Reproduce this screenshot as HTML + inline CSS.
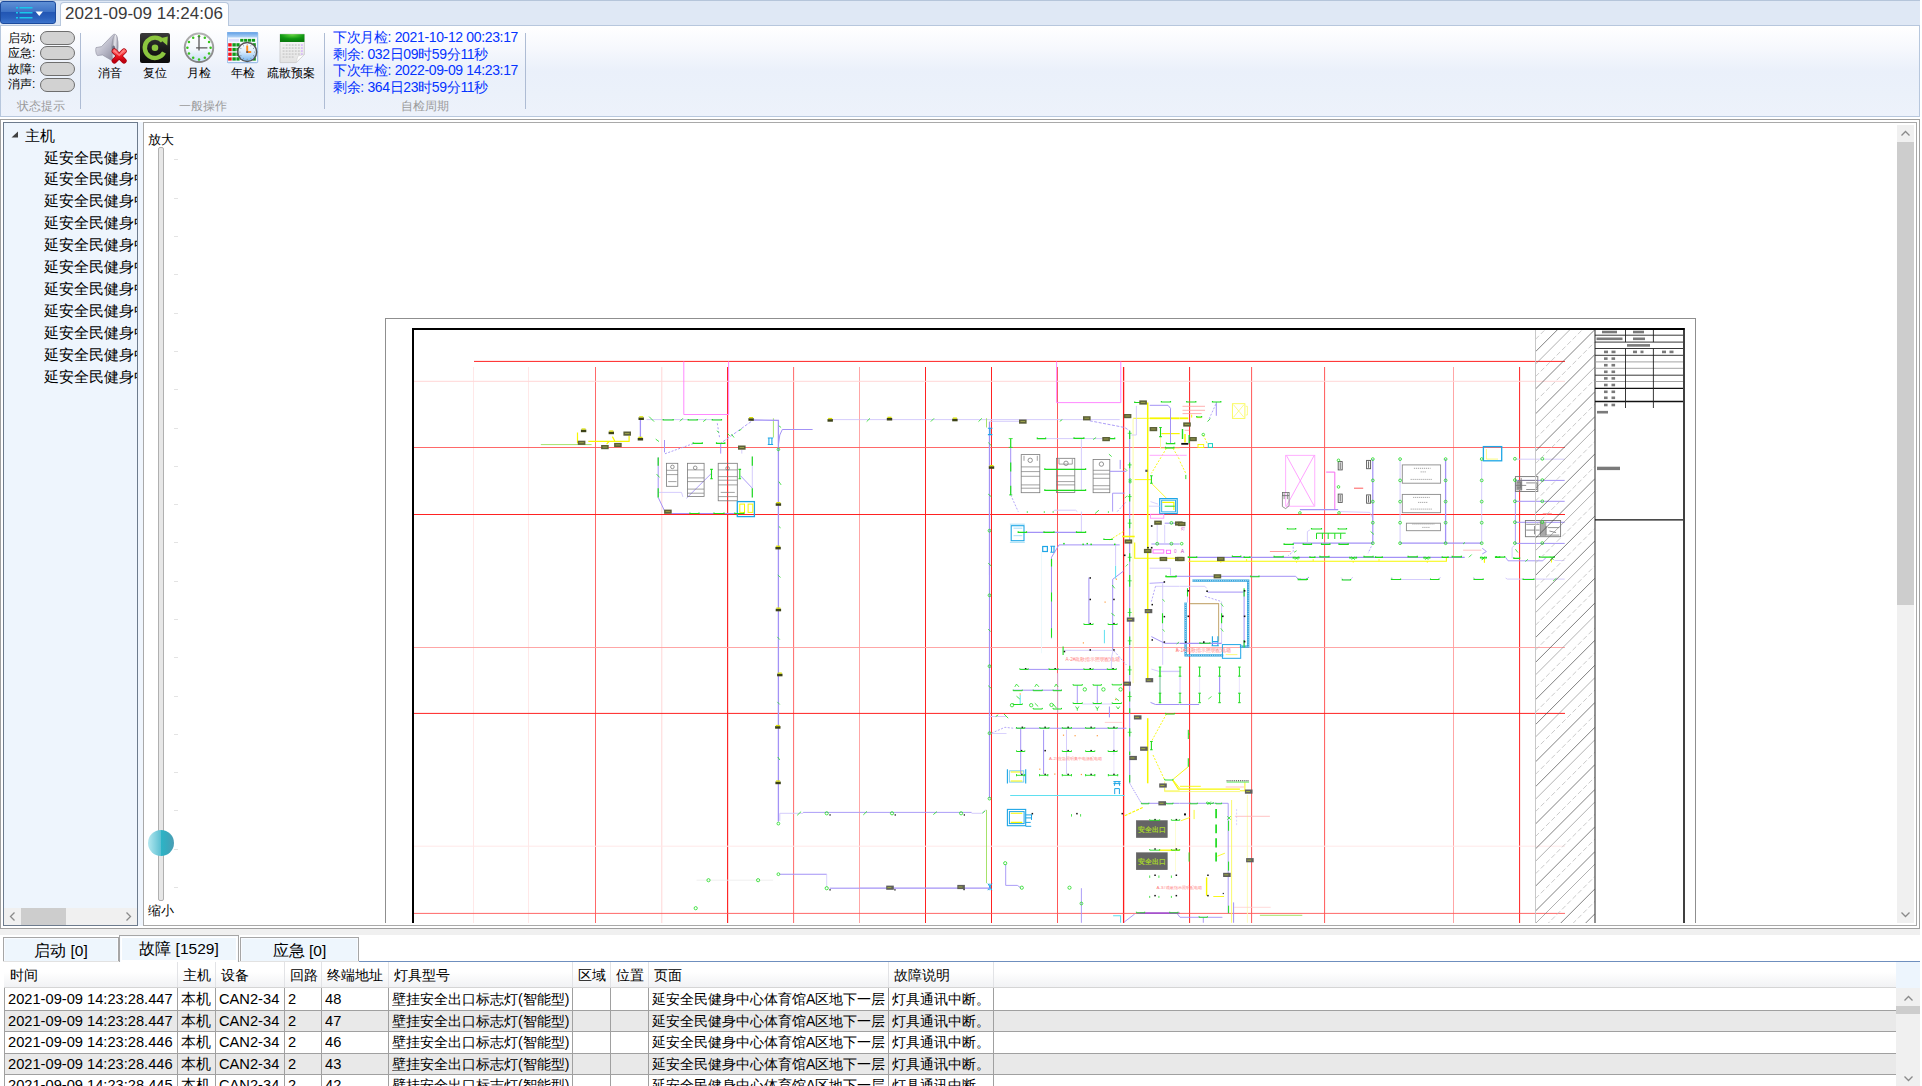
<!DOCTYPE html>
<html lang="zh">
<head>
<meta charset="utf-8">
<title>monitor</title>
<style>
html,body{margin:0;padding:0;}
body{width:1922px;height:1086px;overflow:hidden;background:#fff;position:relative;font-family:"Liberation Sans",sans-serif;color:#000;}
.abs{position:absolute;}
#topbar{left:0;top:0;width:1920px;height:25px;background:#dfe8f5;border-top:1px solid #b5c5da;box-sizing:border-box;}
#appbtn{left:0;top:1px;width:56px;height:23px;box-sizing:border-box;border:1px solid #1c4a9c;border-radius:3px;background:linear-gradient(#5f90d6 0%,#3f73c6 45%,#2256b4 50%,#2a60bc 75%,#3c74cc 100%);}
#tab{left:60px;top:2px;width:169px;height:24px;box-sizing:border-box;border:1px solid #b7c7dd;border-bottom:none;border-radius:4px 4px 0 0;background:linear-gradient(#fdfeff,#ffffff);font-size:17px;line-height:21px;color:#3a3a3a;padding-left:4px;white-space:nowrap;}
#ribbon{left:0;top:25px;width:1920px;height:92px;box-sizing:border-box;border:1px solid #b7c7dd;background:linear-gradient(#ffffff 0%,#f6f8fd 25%,#eaf0fa 50%,#ebf1fa 75%,#edf2fb 100%);}
.sep{width:1px;background:#aebcd4;top:33px;height:76px;}
.stl{left:8px;font-size:12px;line-height:14px;white-space:nowrap;}
.pill{left:40px;width:35px;height:14px;box-sizing:border-box;border:1px solid #6e6e6e;border-radius:7px;background:#d2d2d2;}
.glab{font-size:12px;line-height:14px;color:#9b9b9b;top:99px;white-space:nowrap;text-align:center;}
.blab{font-size:12px;line-height:14px;top:66px;white-space:nowrap;text-align:center;width:60px;}
.cyc{left:333px;font-size:14px;line-height:16px;color:#0433ff;white-space:nowrap;letter-spacing:-0.35px;}

#outer{left:0;top:119px;width:1920px;height:810px;box-sizing:border-box;border:1px solid #a0a0a0;background:#fff;}
#tree{left:3px;top:122px;width:135px;height:804px;box-sizing:border-box;border:1px solid #6d7b8d;background:#eef5fd;overflow:hidden;}
#split{left:138px;top:122px;width:5px;height:804px;background:#eff5fd;}
#canvas{left:143px;top:122px;width:1774px;height:804px;box-sizing:border-box;border:1px solid #a9a9a9;background:#fff;overflow:hidden;}
.ti{left:40px;font-size:14.67px;line-height:18px;white-space:nowrap;}
.zl{left:148px;font-size:13px;line-height:15px;white-space:nowrap;}
#strip{left:0;top:929px;width:1920px;height:6px;background:#f0f0f0;}
.btab{box-sizing:border-box;border:1px solid #a6a6a6;border-bottom:none;background:#eef6fd;box-shadow:inset 1px 1px 0 #f8fbff,inset -1px 0 0 #f8fbff;font-size:15.5px;line-height:18px;text-align:center;white-space:nowrap;}
#tabline{left:359px;top:961px;width:1561px;height:1px;background:#6f8fbe;}
#thead{left:4px;top:962px;width:1892px;height:25px;background:linear-gradient(#ffffff 0%,#ffffff 40%,#f1f2f4 100%);border-bottom:1px solid #d5d5d5;}
.th{top:967px;font-size:14px;line-height:16px;white-space:nowrap;}
.row{left:4px;width:1892px;}
.hl{left:4px;width:1892px;height:1px;background:#a0a0a0;}
.vl{top:962px;width:1px;height:124px;background:#a0a0a0;}
.vh{top:962px;width:1px;height:25px;background:#e2e3e6;}
.td{font-size:14.67px;line-height:18px;white-space:nowrap;overflow:hidden;}
.tc{font-size:14px;}
</style>
</head>
<body>
<!-- ===== top bar / ribbon ===== -->
<div id="topbar" class="abs"></div>
<div id="ribbon" class="abs"></div>
<div id="appbtn" class="abs">
<svg class="abs" style="left:0;top:0" width="54" height="21" viewBox="0 0 54 21">
<g fill="#19c8ea"><rect x="15" y="5" width="2" height="1.5"/><rect x="18.5" y="5" width="13" height="1.5"/><rect x="15" y="10" width="2" height="1.5"/><rect x="18.5" y="10" width="13" height="1.5"/><rect x="15" y="15" width="2" height="1.5"/><rect x="18.5" y="15" width="13" height="1.5"/></g>
<path d="M34.5 9.5 L42 9.5 L38.25 14 Z" fill="#fff"/>
</svg>
</div>
<div id="tab" class="abs">2021-09-09 14:24:06</div>

<div class="abs stl" style="top:31px">启动:</div><div class="abs pill" style="top:31px"></div>
<div class="abs stl" style="top:46px">应急:</div><div class="abs pill" style="top:46px"></div>
<div class="abs stl" style="top:62px">故障:</div><div class="abs pill" style="top:62px"></div>
<div class="abs stl" style="top:77px">消声:</div><div class="abs pill" style="top:78px"></div>
<div class="abs glab" style="left:1px;width:80px">状态提示</div>
<div class="abs sep" style="left:80px"></div>
<div class="abs blab" style="left:80px">消音</div>
<div class="abs blab" style="left:125px">复位</div>
<div class="abs blab" style="left:169px">月检</div>
<div class="abs blab" style="left:213px">年检</div>
<div class="abs blab" style="left:261px">疏散预案</div>
<div class="abs glab" style="left:163px;width:80px">一般操作</div>
<div class="abs sep" style="left:324px"></div>
<div class="abs cyc" style="top:29px">下次月检: 2021-10-12 00:23:17</div>
<div class="abs cyc" style="top:46px">剩余: 032日09时59分11秒</div>
<div class="abs cyc" style="top:62px">下次年检: 2022-09-09 14:23:17</div>
<div class="abs cyc" style="top:79px">剩余: 364日23时59分11秒</div>
<div class="abs glab" style="left:385px;width:80px">自检周期</div>
<div class="abs sep" style="left:525px"></div>
<svg class="abs" style="left:95px;top:32px" width="32" height="32" viewBox="0 0 32 32">
<defs><linearGradient id="spk" x1="0" y1="0" x2="1" y2="1"><stop offset="0" stop-color="#f4f4f8"/><stop offset="0.5" stop-color="#b9b9c8"/><stop offset="1" stop-color="#7f7f90"/></linearGradient>
<linearGradient id="spk2" x1="0" y1="0" x2="1" y2="0"><stop offset="0" stop-color="#8a8a98"/><stop offset="0.5" stop-color="#e8e8ee"/><stop offset="1" stop-color="#a0a0ae"/></linearGradient>
<linearGradient id="rx" x1="0" y1="0" x2="0" y2="1"><stop offset="0" stop-color="#ff6a6a"/><stop offset="0.5" stop-color="#f01820"/><stop offset="1" stop-color="#c00010"/></linearGradient></defs>
<path d="M1 15.6 L6.5 14.6 L17.5 3.2 C19 1.6 21 1.8 22 5 C23.6 10 23.4 19 21.6 25 C20.6 28.6 19 30.2 17.6 29 L7.5 23 L2.4 23.6 C0.6 21.6 0.4 17.6 1 15.6 Z" fill="url(#spk)" stroke="#8c8c9c" stroke-width="0.6"/>
<ellipse cx="19.6" cy="15" rx="3" ry="12.6" fill="url(#spk2)" stroke="#9a9aa8" stroke-width="0.5" transform="rotate(4 19.6 15)"/>
<ellipse cx="18.6" cy="18" rx="1.6" ry="4.4" fill="#6e6e80"/>
<path d="M19.4 19.2 L29 28.8 M29 19.2 L19.4 28.8" stroke="#a8000c" stroke-width="5.4" stroke-linecap="round"/>
<path d="M19.4 19.2 L29 28.8 M29 19.2 L19.4 28.8" stroke="url(#rx)" stroke-width="4" stroke-linecap="round"/>
<path d="M19.6 19.0 L24.2 23.4 L28.6 19.0" stroke="#ff9a9a" stroke-width="1.2" fill="none" stroke-linecap="round" opacity="0.7"/>
</svg>
<svg class="abs" style="left:140px;top:33px" width="30" height="30" viewBox="0 0 30 30">
<defs><linearGradient id="bk" x1="0" y1="0" x2="0" y2="1"><stop offset="0" stop-color="#3a3a3a"/><stop offset="0.5" stop-color="#1c1c1c"/><stop offset="1" stop-color="#0a0a0a"/></linearGradient></defs>
<rect x="0" y="0" width="30" height="30" rx="2" fill="url(#bk)"/>
<path d="M22.58 7.97 A10.2 10.2 0 1 0 24.01 19.59" fill="none" stroke="#8cc63f" stroke-width="4.4"/>
<path d="M19.2 5.6 L27.8 3.4 L27.2 12.4 Z" fill="#8cc63f"/>
<circle cx="15" cy="14.8" r="3.3" fill="#8cc63f"/>
</svg>
<svg class="abs" style="left:183px;top:32px" width="32" height="32" viewBox="0 0 32 32">
<defs><linearGradient id="cf" x1="0" y1="0" x2="0" y2="1"><stop offset="0" stop-color="#ffffff"/><stop offset="0.55" stop-color="#f4f8fd"/><stop offset="1" stop-color="#c9def5"/></linearGradient>
<linearGradient id="cr" x1="0" y1="0" x2="0" y2="1"><stop offset="0" stop-color="#b4b4b4"/><stop offset="1" stop-color="#7e7e7e"/></linearGradient></defs>
<circle cx="16" cy="15.8" r="15.2" fill="url(#cr)"/>
<circle cx="16" cy="15.8" r="13.3" fill="url(#cf)"/>
<circle cx="16.00" cy="4.20" r="1.25" fill="#35c41a"/><circle cx="21.80" cy="5.75" r="1.25" fill="#35c41a"/><circle cx="26.05" cy="10.00" r="1.25" fill="#35c41a"/><circle cx="27.60" cy="15.80" r="1.25" fill="#35c41a"/><circle cx="26.05" cy="21.60" r="1.25" fill="#35c41a"/><circle cx="21.80" cy="25.85" r="1.25" fill="#35c41a"/><circle cx="16.00" cy="27.40" r="1.25" fill="#35c41a"/><circle cx="10.20" cy="25.85" r="1.25" fill="#35c41a"/><circle cx="5.95" cy="21.60" r="1.25" fill="#35c41a"/><circle cx="4.40" cy="15.80" r="1.25" fill="#35c41a"/><circle cx="5.95" cy="10.00" r="1.25" fill="#35c41a"/><circle cx="10.20" cy="5.75" r="1.25" fill="#35c41a"/>
<path d="M16 4 L16 18.6 M13.1 15.8 L24.4 15.8" stroke="#5a5a5a" stroke-width="1.3" fill="none"/>
</svg>
<svg class="abs" style="left:227px;top:32px" width="32" height="32" viewBox="0 0 32 32">
<defs><linearGradient id="cb" x1="0" y1="0" x2="0" y2="1"><stop offset="0" stop-color="#5f9fe6"/><stop offset="1" stop-color="#b4d4f6"/></linearGradient>
<linearGradient id="cf2" x1="0" y1="0" x2="0" y2="1"><stop offset="0" stop-color="#ffffff"/><stop offset="0.5" stop-color="#d8eafb"/><stop offset="1" stop-color="#7db8ee"/></linearGradient></defs>
<rect x="0.3" y="0.3" width="30.4" height="30.4" rx="1" fill="#f4f8ff" stroke="#6f9fdc" stroke-width="0.8"/>
<rect x="0.3" y="0.3" width="30.4" height="5.2" fill="url(#cb)"/>
<rect x="1.8" y="6.9" width="10.2" height="2.8" fill="#dde0fb"/>
<rect x="13.2" y="6.9" width="3.2" height="2.8" fill="#109a18"/><rect x="17.1" y="6.9" width="3.2" height="2.8" fill="#109a18"/><rect x="21.0" y="6.9" width="3.2" height="2.8" fill="#109a18"/><rect x="24.9" y="6.9" width="3.2" height="2.8" fill="#109a18"/><rect x="1.2" y="11.2" width="3.5" height="3.3" fill="#f5121a"/><rect x="5.4" y="11.2" width="3.4" height="3.3" fill="#109a18"/><rect x="9.4" y="11.2" width="3.2" height="3.3" fill="#109a18"/><rect x="25.6" y="11.2" width="3.2" height="3.3" fill="#109a18"/><rect x="1.2" y="15.9" width="3.5" height="3.3" fill="#f5121a"/><rect x="5.4" y="15.9" width="3.4" height="3.3" fill="#109a18"/><rect x="9.4" y="15.9" width="3.2" height="3.3" fill="#109a18"/><rect x="25.6" y="15.9" width="3.2" height="3.3" fill="#109a18"/><rect x="1.2" y="20.6" width="3.5" height="3.3" fill="#f5121a"/><rect x="5.4" y="20.6" width="3.4" height="3.3" fill="#109a18"/><rect x="9.4" y="20.6" width="3.2" height="3.3" fill="#109a18"/><rect x="25.6" y="20.6" width="3.2" height="3.3" fill="#109a18"/><rect x="1.2" y="25.3" width="3.5" height="3.3" fill="#f5121a"/><rect x="5.4" y="25.3" width="3.4" height="3.3" fill="#109a18"/><rect x="9.4" y="25.3" width="3.2" height="3.3" fill="#109a18"/><rect x="25.6" y="25.3" width="3.2" height="3.3" fill="#109a18"/>
<circle cx="20.2" cy="20" r="10.2" fill="#555"/>
<circle cx="20.2" cy="20" r="8.7" fill="url(#cf2)"/>
<circle cx="20.20" cy="12.70" r="0.55" fill="#7a8a9c"/><circle cx="23.85" cy="13.68" r="0.55" fill="#7a8a9c"/><circle cx="26.52" cy="16.35" r="0.55" fill="#7a8a9c"/><circle cx="27.50" cy="20.00" r="0.55" fill="#7a8a9c"/><circle cx="26.52" cy="23.65" r="0.55" fill="#7a8a9c"/><circle cx="23.85" cy="26.32" r="0.55" fill="#7a8a9c"/><circle cx="20.20" cy="27.30" r="0.55" fill="#7a8a9c"/><circle cx="16.55" cy="26.32" r="0.55" fill="#7a8a9c"/><circle cx="13.88" cy="23.65" r="0.55" fill="#7a8a9c"/><circle cx="12.90" cy="20.00" r="0.55" fill="#7a8a9c"/><circle cx="13.88" cy="16.35" r="0.55" fill="#7a8a9c"/><circle cx="16.55" cy="13.68" r="0.55" fill="#7a8a9c"/>
<path d="M20.2 13.6 L20.2 20 L24.2 20" stroke="#ff8a18" stroke-width="1.9" fill="none"/>
<rect x="19.3" y="19.1" width="1.8" height="1.8" fill="#556"/>
</svg>
<svg class="abs" style="left:279px;top:33px" width="27" height="31" viewBox="0 0 27 31">
<defs><linearGradient id="pg" x1="0" y1="0" x2="0" y2="1"><stop offset="0" stop-color="#fafafa"/><stop offset="1" stop-color="#e2e2e2"/></linearGradient>
<radialGradient id="gh" cx="0.5" cy="0.1" r="0.8"><stop offset="0" stop-color="#5fd23c"/><stop offset="0.6" stop-color="#0f9812"/><stop offset="1" stop-color="#0a7d0e"/></radialGradient></defs>
<path d="M1 1.2 L25.4 1.2 L25.4 21.5 L17 29.6 L1 29.6 Z" fill="url(#pg)" stroke="#c2c2c2" stroke-width="0.7"/>
<rect x="1" y="1.2" width="24.4" height="7.8" fill="url(#gh)"/>
<rect x="3.6" y="11.2" width="1.9" height="1.7" fill="#e6e6e6"/><rect x="6.7" y="11.2" width="1.9" height="1.7" fill="#cfcfcf"/><rect x="9.7" y="11.2" width="1.9" height="1.7" fill="#cfcfcf"/><rect x="12.7" y="11.2" width="1.9" height="1.7" fill="#cfcfcf"/><rect x="15.8" y="11.2" width="1.9" height="1.7" fill="#cfcfcf"/><rect x="18.9" y="11.2" width="1.9" height="1.7" fill="#cfcfcf"/><rect x="21.9" y="11.2" width="1.9" height="1.7" fill="#d9b8fb"/><rect x="3.6" y="14.2" width="1.9" height="1.7" fill="#cfcfcf"/><rect x="6.7" y="14.2" width="1.9" height="1.7" fill="#cfcfcf"/><rect x="9.7" y="14.2" width="1.9" height="1.7" fill="#cfcfcf"/><rect x="12.7" y="14.2" width="1.9" height="1.7" fill="#cfcfcf"/><rect x="15.8" y="14.2" width="1.9" height="1.7" fill="#cfcfcf"/><rect x="18.9" y="14.2" width="1.9" height="1.7" fill="#cfcfcf"/><rect x="21.9" y="14.2" width="1.9" height="1.7" fill="#d9b8fb"/><rect x="3.6" y="17.2" width="1.9" height="1.7" fill="#cfcfcf"/><rect x="6.7" y="17.2" width="1.9" height="1.7" fill="#cfcfcf"/><rect x="9.7" y="17.2" width="1.9" height="1.7" fill="#cfcfcf"/><rect x="12.7" y="17.2" width="1.9" height="1.7" fill="#cfcfcf"/><rect x="15.8" y="17.2" width="1.9" height="1.7" fill="#cfcfcf"/><rect x="18.9" y="17.2" width="1.9" height="1.7" fill="#cfcfcf"/><rect x="21.9" y="17.2" width="1.9" height="1.7" fill="#d9b8fb"/><rect x="3.6" y="20.2" width="1.9" height="1.7" fill="#cfcfcf"/><rect x="6.7" y="20.2" width="1.9" height="1.7" fill="#cfcfcf"/><rect x="9.7" y="20.2" width="1.9" height="1.7" fill="#cfcfcf"/><rect x="12.7" y="20.2" width="1.9" height="1.7" fill="#cfcfcf"/><rect x="15.8" y="20.2" width="1.9" height="1.7" fill="#cfcfcf"/><rect x="18.9" y="20.2" width="1.9" height="1.7" fill="#cfcfcf"/><rect x="21.9" y="20.2" width="1.9" height="1.7" fill="#d9b8fb"/><rect x="3.6" y="23.2" width="1.9" height="1.7" fill="#cfcfcf"/><rect x="6.7" y="23.2" width="1.9" height="1.7" fill="#cfcfcf"/><rect x="9.7" y="23.2" width="1.9" height="1.7" fill="#cfcfcf"/><rect x="12.7" y="23.2" width="1.9" height="1.7" fill="#cfcfcf"/>
<path d="M25.4 21.5 L17 29.6 L19 23 Z" fill="#fff" stroke="#c8c8c8" stroke-width="0.5"/>
</svg>


<!-- ===== main area ===== -->
<div id="outer" class="abs"></div>
<div id="tree" class="abs"></div>
<svg class="abs" style="left:11px;top:131px" width="8" height="8" viewBox="0 0 8 8"><path d="M7 0.5 L7 6.5 L0.5 6.5 Z" fill="#404040"/></svg>
<div class="abs ti" style="left:25px;top:127px">主机</div>
<div class="abs ti" style="left:44px;top:148.5px;width:93px;overflow:hidden">延安全民健身中心</div>
<div class="abs ti" style="left:44px;top:170.4px;width:93px;overflow:hidden">延安全民健身中心</div>
<div class="abs ti" style="left:44px;top:192.3px;width:93px;overflow:hidden">延安全民健身中心</div>
<div class="abs ti" style="left:44px;top:214.2px;width:93px;overflow:hidden">延安全民健身中心</div>
<div class="abs ti" style="left:44px;top:236.1px;width:93px;overflow:hidden">延安全民健身中心</div>
<div class="abs ti" style="left:44px;top:258.0px;width:93px;overflow:hidden">延安全民健身中心</div>
<div class="abs ti" style="left:44px;top:279.9px;width:93px;overflow:hidden">延安全民健身中心</div>
<div class="abs ti" style="left:44px;top:301.8px;width:93px;overflow:hidden">延安全民健身中心</div>
<div class="abs ti" style="left:44px;top:323.7px;width:93px;overflow:hidden">延安全民健身中心</div>
<div class="abs ti" style="left:44px;top:345.6px;width:93px;overflow:hidden">延安全民健身中心</div>
<div class="abs ti" style="left:44px;top:367.5px;width:93px;overflow:hidden">延安全民健身中心</div>
<div class="abs" style="left:4px;top:908px;width:133px;height:17px;background:#f0f0f0"></div>
<div class="abs" style="left:21px;top:908px;width:45px;height:17px;background:#cdcdcd"></div>
<svg class="abs" style="left:4px;top:908px" width="133" height="17" viewBox="0 0 133 17"><path d="M10.5 4.5 L6.5 8.5 L10.5 12.5 M122.5 4.5 L126.5 8.5 L122.5 12.5" fill="none" stroke="#8a8a8a" stroke-width="1.3"/></svg>
<div id="split" class="abs"></div>
<div id="canvas" class="abs"></div>
<!-- DRAWING-START -->
<svg class="abs" style="left:146px;top:125px" width="1751" height="798" viewBox="146 125 1751 798">
<rect x="385.5" y="318.5" width="1310" height="640" fill="#fff" stroke="#8f8f8f" stroke-width="1"/>
<path d="M473.5 367.0 L473.5 930.0" stroke="#ffe8e8" stroke-width="1"/>
<path d="M528.5 367.0 L528.5 930.0" stroke="#ffe8e8" stroke-width="1"/>
<path d="M595.5 367.0 L595.5 930.0" stroke="#ff5858" stroke-width="0.9"/>
<path d="M661.8 367.0 L661.8 930.0" stroke="#ffd6d6" stroke-width="1"/>
<path d="M727.6 367.0 L727.6 930.0" stroke="#ff2222" stroke-width="1.15"/>
<path d="M793.6 367.0 L793.6 930.0" stroke="#ff5858" stroke-width="0.9"/>
<path d="M859.5 367.0 L859.5 930.0" stroke="#ff9c9c" stroke-width="0.9"/>
<path d="M925.5 367.0 L925.5 930.0" stroke="#ff2222" stroke-width="1"/>
<path d="M991.5 367.0 L991.5 930.0" stroke="#ff2222" stroke-width="1"/>
<path d="M1057.5 367.0 L1057.5 930.0" stroke="#ff5858" stroke-width="1"/>
<path d="M1123.6 367.0 L1123.6 930.0" stroke="#ff1a1a" stroke-width="1.3"/>
<path d="M1189.6 367.0 L1189.6 930.0" stroke="#ff2222" stroke-width="1"/>
<path d="M1251.6 367.0 L1251.6 930.0" stroke="#ff5858" stroke-width="1"/>
<path d="M1324.6 367.0 L1324.6 930.0" stroke="#ff5858" stroke-width="1"/>
<path d="M1453.5 367.0 L1453.5 930.0" stroke="#ff9c9c" stroke-width="0.9"/>
<path d="M1519.6 367.0 L1519.6 930.0" stroke="#ff2222" stroke-width="1"/>
<path d="M474.0 361.4 L1565.0 361.4" stroke="#ff2222" stroke-width="1"/>
<path d="M414.0 381.3 L1565.0 381.3" stroke="#ffd6d6" stroke-width="1"/>
<path d="M414.0 447.5 L1565.0 447.5" stroke="#ff5858" stroke-width="0.9"/>
<path d="M414.0 514.5 L1565.0 514.5" stroke="#ff2222" stroke-width="1"/>
<path d="M414.0 647.5 L1565.0 647.5" stroke="#ff9c9c" stroke-width="0.9"/>
<path d="M414.0 713.4 L1565.0 713.4" stroke="#ff2222" stroke-width="1"/>
<path d="M414.0 846.2 L1565.0 846.2" stroke="#ffe8e8" stroke-width="1"/>
<path d="M414.0 913.4 L1565.0 913.4" stroke="#ff5858" stroke-width="0.9"/>
<path d="M683.8 361.4 L683.8 414.5 L728.6 414.5 L728.6 361.4" fill="none" stroke="#ff7cff" stroke-width="0.9"/>
<path d="M1056.6 361.4 L1056.6 402.6 L1120.8 402.6 L1120.8 361.4" fill="none" stroke="#ff7cff" stroke-width="0.9"/>
<path d="M577.5 432.5 L577.5 443.3 M588.3 441.3 L629.1 441.3 L629.1 435.8 M606.6 444.1 L609.1 441.3 M612.4 436.6 L614.9 441.3" fill="none" stroke="#f7f700" stroke-width="1.2"/>
<path d="M540.8 444.6 L591.6 444.6" fill="none" stroke="#a6e26a" stroke-width="1"/>
<path d="M773.4 418.3 L773.4 437.5" fill="none" stroke="#a6e26a" stroke-width="1"/>
<path d="M640.4 420.0 L640.4 437.5" fill="none" stroke="#a392f6" stroke-width="1.3"/>
<path d="M646.6 419.6 L721.5 419.6" fill="none" stroke="#d0c6fc" stroke-width="0.9"/>
<path d="M751.1 420.0 L778.4 420.3 L778.4 575.0" fill="none" stroke="#a392f6" stroke-width="1.3"/>
<path d="M751.1 421.6 L720.7 443.3" fill="none" stroke="#a392f6" stroke-width="0.9" stroke-dasharray="3 1.5"/>
<path d="M693.2 443.6 L664.0 454.1" fill="none" stroke="#a392f6" stroke-width="0.9" stroke-dasharray="2 1.5"/>
<path d="M664.5 440.0 L664.5 452.4" fill="none" stroke="#a392f6" stroke-width="1"/>
<path d="M658.2 457.4 L658.2 497.4 L664.9 511.6" fill="none" stroke="#a392f6" stroke-width="1"/>
<path d="M671.5 513.5 L736.5 513.5" fill="none" stroke="#a392f6" stroke-width="1.2"/>
<path d="M659.0 492.4 L681.5 492.4 L682.9 496.9" fill="none" stroke="#d0c6fc" stroke-width="0.9"/>
<path d="M686.5 498.2 L711.5 473.3" fill="none" stroke="#a392f6" stroke-width="0.9"/>
<path d="M720.7 443.3 L720.7 453.6" fill="none" stroke="#a392f6" stroke-width="1"/>
<path d="M717.3 423.3 L719.8 439.1" fill="none" stroke="#a392f6" stroke-width="0.9" stroke-dasharray="2 2"/>
<path d="M740.6 475.8 L752.3 488.2" fill="none" stroke="#a392f6" stroke-width="0.9"/>
<path d="M752.3 456.6 L752.3 497.4" fill="none" stroke="#d0c6fc" stroke-width="0.9"/>
<path d="M778.4 445.0 L779.8 435.0 L782.3 429.5 L812.6 429.5" fill="none" stroke="#a392f6" stroke-width="1"/>
<path d="M830.2 419.6 L859.7 419.6" fill="none" stroke="#d0c6fc" stroke-width="0.9"/>
<path d="M741.8 449.9 L741.8 453.6" fill="none" stroke="#d0c6fc" stroke-width="0.9"/>
<path d="M649.1 416.6 L654.1 421.6 M679.9 421.3 L682.9 418.3 M703.2 421.6 L706.2 419.3 M655.7 439.1 L659.0 441.6 M727.3 433.3 L729.8 435.8 M731.5 434.1 L734.0 437.5 M739.0 430.8 L741.5 429.1 M716.8 430.8 L719.0 432.5 M656.6 474.1 L659.5 477.4 M778.9 481.6 L781.1 484.9 M778.9 425.8 L781.1 427.5 M778.9 526.5 L780.6 527.9" fill="none" stroke="#1fdc1f" stroke-width="0.8"/>
<path d="M658.2 457.4 L658.2 465.8 M658.2 488.2 L658.2 497.4 M752.3 456.6 L752.3 465.8 M752.3 488.2 L752.3 497.4" fill="none" stroke="#1fdc1f" stroke-width="1.2"/>
<rect x="666.5" y="463.3" width="11.3" height="23.0" fill="none" stroke="#7a7a7a" stroke-width="0.8"/>
<rect x="687.4" y="463.3" width="16.7" height="33.3" fill="none" stroke="#7a7a7a" stroke-width="0.8"/>
<rect x="718.2" y="463.3" width="19.1" height="37.5" fill="none" stroke="#7a7a7a" stroke-width="0.8"/>
<path d="M666.5 470.3 L677.9 470.3 M666.5 474.6 L677.9 474.6 M668.2 481.6 L676.5 481.6 M687.4 469.9 L704.0 469.9 M687.4 477.9 L704.0 477.9 M687.4 481.6 L704.0 481.6 M687.4 489.1 L704.0 489.1 M687.4 493.2 L704.0 493.2 M718.2 469.9 L737.3 469.9 M718.2 476.6 L737.3 476.6 M718.2 480.2 L737.3 480.2 M718.2 484.9 L737.3 484.9 M720.7 492.4 L734.8 492.4 M718.2 496.6 L737.3 496.6" fill="none" stroke="#7a7a7a" stroke-width="0.7"/>
<rect x="737.3" y="501.6" width="17.1" height="15.0" fill="none" stroke="#1ea6e6" stroke-width="1.3"/>
<rect x="739.8" y="504.1" width="4.7" height="8.3" fill="none" stroke="#f7f700" stroke-width="1"/>
<rect x="748.1" y="504.1" width="4.7" height="8.3" fill="none" stroke="#f7f700" stroke-width="1"/>
<path d="M768.9 438.0 L768.9 444.5 M771.9 438.0 L771.9 444.5 M767.8 438.0 L773.1 438.0 M767.8 444.5 L773.1 444.5" fill="none" stroke="#1ea6e6" stroke-width="1.1"/>
<path d="M860.0 419.6 L1119.7 419.6" fill="none" stroke="#d0c6fc" stroke-width="0.9"/>
<path d="M989.5 421.6 L989.5 575.0" fill="none" stroke="#a392f6" stroke-width="1.3"/>
<path d="M986.5 418.3 L986.5 427.5" fill="none" stroke="#a6e26a" stroke-width="1"/>
<path d="M989.5 421.3 L1019.8 421.3" fill="none" stroke="#d0c6fc" stroke-width="0.9"/>
<path d="M989.9 428.3 L989.9 434.6 M987.9 428.3 L992.4 428.3 M987.9 434.6 L992.4 434.6" fill="none" stroke="#1ea6e6" stroke-width="1.1"/>
<path d="M1010.7 447.4 L1010.7 494.9" fill="none" stroke="#a392f6" stroke-width="1"/>
<path d="M1010.7 494.9 L1018.2 511.6" fill="none" stroke="#a392f6" stroke-width="0.8" stroke-dasharray="2 1.5"/>
<path d="M1010.7 438.6 L1010.7 447.4 M1010.7 462.4 L1010.7 471.6 M1010.7 485.7 L1010.7 494.9" fill="none" stroke="#1fdc1f" stroke-width="1.2"/>
<path d="M1008.7 438.6 L1012.7 438.6 M1008.7 447.4 L1012.7 447.4 M1009.0 494.9 L1012.3 494.9" fill="none" stroke="#1fdc1f" stroke-width="0.8"/>
<path d="M1037.3 438.6 L1114.7 438.6" fill="none" stroke="#d0c6fc" stroke-width="0.9"/>
<path d="M1089.8 420.8 L1124.7 427.5 L1129.7 430.8" fill="none" stroke="#a392f6" stroke-width="0.9" stroke-dasharray="3 1.5"/>
<path d="M1129.7 430.8 L1129.7 575.0" fill="none" stroke="#a392f6" stroke-width="1"/>
<path d="M1081.4 438.6 L1081.4 490.7 M1081.4 511.6 L1081.4 532.4" fill="none" stroke="#d0c6fc" stroke-width="0.9"/>
<rect x="1021.2" y="454.6" width="18.6" height="38.1" fill="none" stroke="#7a7a7a" stroke-width="0.8"/>
<rect x="1056.5" y="458.3" width="18.3" height="34.1" fill="none" stroke="#7a7a7a" stroke-width="0.8"/>
<rect x="1093.1" y="459.4" width="16.7" height="33.3" fill="none" stroke="#7a7a7a" stroke-width="0.8"/>
<path d="M1021.2 466.9 L1039.8 466.9 M1021.2 471.6 L1039.8 471.6 M1021.2 476.3 L1039.8 476.3 M1021.2 484.9 L1039.8 484.9 M1021.2 488.2 L1039.8 488.2 M1024.0 455.8 L1024.0 460.8 M1037.3 455.8 L1037.3 460.8 M1056.5 469.4 L1074.8 469.4 M1056.5 475.8 L1074.8 475.8 M1056.5 481.6 L1074.8 481.6 M1056.5 484.9 L1074.8 484.9 M1056.5 490.4 L1074.8 490.4 M1059.0 459.1 L1059.0 464.1 L1072.3 464.1 L1072.3 459.1 M1093.1 470.3 L1109.8 470.3 M1093.1 474.1 L1109.8 474.1 M1093.1 478.3 L1109.8 478.3 M1093.1 485.7 L1109.8 485.7 M1093.1 489.1 L1109.8 489.1" fill="none" stroke="#7a7a7a" stroke-width="0.7"/>
<path d="M1109.8 471.3 L1126.4 471.3" fill="none" stroke="#a392f6" stroke-width="1"/>
<path d="M1120.2 459.9 L1120.2 469.1" fill="none" stroke="#a392f6" stroke-width="1"/>
<path d="M1053.1 511.6 L1054.8 510.2 L1075.6 510.2 L1077.3 511.6" fill="none" stroke="#d0c6fc" stroke-width="0.9"/>
<path d="M1027.3 511.2 L1027.3 512.9 M1044.3 511.2 L1044.3 512.9 M1053.1 511.2 L1053.1 512.9 M1095.1 513.5 L1098.9 510.2 M1108.4 511.2 L1108.4 512.9 M866.7 421.6 L870.0 418.3 M930.8 421.6 L934.1 418.3 M978.5 421.6 L981.9 418.3 M1059.8 421.3 L1062.3 419.6 M988.2 442.5 L991.5 445.8 M988.2 494.1 L991.5 496.9 M988.2 563.2 L991.5 566.2 M1093.1 439.6 L1096.1 437.5 M1108.9 454.1 L1111.7 456.6" fill="none" stroke="#1fdc1f" stroke-width="0.8"/>
<path d="M1112.6 511.6 L1112.6 493.2 L1124.7 493.2" fill="none" stroke="#a392f6" stroke-width="0.9"/>
<path d="M1117.2 511.6 L1126.4 501.6" fill="none" stroke="#a392f6" stroke-width="0.8" stroke-dasharray="2 1.5"/>
<rect x="1011.2" y="525.7" width="12.8" height="15.0" fill="none" stroke="#1ea6e6" stroke-width="1.1"/>
<path d="M1009.9 524.2 L1024.8 524.2 M1009.9 542.4 L1024.8 542.4 M1013.5 528.2 L1022.3 528.2 M1013.5 535.7 L1022.3 535.7" fill="none" stroke="#9fdcf6" stroke-width="0.9"/>
<path d="M1026.5 532.4 L1081.4 532.4" fill="none" stroke="#a392f6" stroke-width="1.2"/>
<rect x="1042.7" y="546.5" width="4.7" height="5.0" fill="none" stroke="#1ea6e6" stroke-width="1.2"/>
<path d="M1051.5 546.2 L1051.5 552.3 M1054.0 546.2 L1054.0 552.3 M1050.3 546.2 L1055.1 546.2 M1050.3 552.3 L1055.1 552.3" fill="none" stroke="#1ea6e6" stroke-width="1.1"/>
<path d="M1119.7 544.9 L1059.0 544.9 L1051.5 557.3 L1051.5 575.0" fill="none" stroke="#a392f6" stroke-width="1"/>
<path d="M1051.5 559.0 L1051.5 566.5" fill="none" stroke="#1fdc1f" stroke-width="1.2"/>
<path d="M1115.6 544.9 L1115.6 565.7" fill="none" stroke="#d0c6fc" stroke-width="0.9"/>
<path d="M1041.5 551.5 L1041.5 575.0" fill="none" stroke="#eaf8fc" stroke-width="0.9"/>
<path d="M1147.7 402.5 L1147.7 575.0" fill="none" stroke="#f7f700" stroke-width="1.5"/>
<path d="M1133.1 418.3 L1149.7 418.3" fill="none" stroke="#f7f700" stroke-width="0.9"/>
<path d="M1149.7 418.3 L1179.7 418.3" fill="none" stroke="#f7f700" stroke-width="1.8"/>
<path d="M1133.1 418.3 L1133.1 575.0" fill="none" stroke="#fbfb9a" stroke-width="0.9"/>
<path d="M1161.4 433.6 L1179.7 433.6" fill="none" stroke="#f7f700" stroke-width="1.2"/>
<path d="M1160.5 433.6 L1160.5 448.3 L1179.7 448.3" fill="none" stroke="#fbfb9a" stroke-width="0.9"/>
<path d="M1166.4 448.3 L1151.4 473.3" fill="none" stroke="#f7f700" stroke-width="0.9" stroke-dasharray="2 1.5"/>
<path d="M1151.4 483.2 L1166.4 498.2" fill="none" stroke="#f7f700" stroke-width="0.8"/>
<path d="M1173.0 448.3 L1179.7 459.9" fill="none" stroke="#f7f700" stroke-width="0.9" stroke-dasharray="2 1.5"/>
<path d="M1134.7 479.6 L1151.4 479.6" fill="none" stroke="#f7f700" stroke-width="0.9"/>
<path d="M1122.2 536.5 L1134.7 536.5" fill="none" stroke="#f7f700" stroke-width="1.6"/>
<path d="M1109.8 539.9 L1124.7 530.7" fill="none" stroke="#f7f700" stroke-width="0.9" stroke-dasharray="2 1.5"/>
<path d="M1134.7 542.4 L1134.7 558.2 L1179.7 558.2" fill="none" stroke="#f7f700" stroke-width="1.1"/>
<path d="M1149.7 455.3 L1179.7 455.3" fill="none" stroke="#ff9cff" stroke-width="0.9"/>
<path d="M1136.4 405.8 L1136.4 435.0 L1131.4 435.0" fill="none" stroke="#d0c6fc" stroke-width="0.9"/>
<path d="M1149.7 405.3 L1168.0 405.3 L1170.5 408.3 L1170.5 443.3" fill="none" stroke="#a392f6" stroke-width="1"/>
<rect x="1159.7" y="498.6" width="17.5" height="15.0" fill="none" stroke="#1ea6e6" stroke-width="1.2"/>
<rect x="1161.7" y="500.2" width="13.8" height="11.7" fill="none" stroke="#1ea6e6" stroke-width="0.9"/>
<path d="M1162.2 502.4 L1173.9 502.4 L1173.9 509.9" fill="none" stroke="#f7f700" stroke-width="1.1"/>
<path d="M1164.7 506.2 L1174.7 506.2" fill="none" stroke="#1fdc1f" stroke-width="1"/>
<rect x="1150.5" y="514.2" width="13.3" height="4.0" fill="none" stroke="#ff8cff" stroke-width="0.8"/>
<rect x="1153.0" y="549.8" width="10.8" height="3.3" fill="none" stroke="#ff6cff" stroke-width="0.9"/>
<rect x="1166.4" y="550.2" width="4.2" height="3.3" fill="none" stroke="#ff6cff" stroke-width="0.9"/>
<text x="1173.9" y="552.8" font-size="4.5" fill="#e060e0" font-family="Liberation Sans, sans-serif">0</text>
<path d="M1164.7 523.2 L1179.7 523.2" fill="none" stroke="#a392f6" stroke-width="1"/>
<path d="M1151.4 544.0 L1179.7 544.0" fill="none" stroke="#a392f6" stroke-width="1"/>
<path d="M1157.2 524.9 L1157.2 544.0 M1164.7 524.9 L1164.7 544.0" fill="none" stroke="#d0c6fc" stroke-width="0.8"/>
<path d="M1129.7 430.8 L1129.7 439.1 M1129.7 462.4 L1129.7 468.3 M1129.7 494.1 L1129.7 501.6 M1129.7 519.0 L1129.7 528.2 M1129.7 553.2 L1129.7 561.5" fill="none" stroke="#1fdc1f" stroke-width="1.1"/>
<path d="M1127.7 433.3 L1131.7 433.3 M1127.7 464.9 L1131.7 464.9 M1127.7 496.6 L1131.7 496.6 M1127.7 523.2 L1131.7 523.2 M1127.7 557.3 L1131.7 557.3 M1124.7 468.3 L1127.2 470.8 M1124.7 498.2 L1127.2 495.7 M1125.6 566.5 L1128.1 564.0" fill="none" stroke="#1fdc1f" stroke-width="0.7"/>
<path d="M1150.5 501.6 L1158.0 504.1 M1148.9 506.2 L1159.7 506.2" fill="none" stroke="#d0c6fc" stroke-width="0.8"/>
<path d="M1149.7 568.2 L1170.5 568.2 L1170.5 575.0" fill="none" stroke="#d0c6fc" stroke-width="0.9"/>
<path d="M1182.5 406.3 L1205.0 406.3 M1182.5 410.3 L1205.0 410.3 M1182.5 413.6 L1201.6 413.6" fill="none" stroke="#ff9c9c" stroke-width="0.8"/>
<path d="M1216.3 402.0 L1216.3 415.8" fill="none" stroke="#a392f6" stroke-width="1"/>
<path d="M1215.8 404.2 L1208.3 420.8" fill="none" stroke="#a392f6" stroke-width="0.8" stroke-dasharray="2 1.5"/>
<path d="M1180.0 418.3 L1188.3 418.3" fill="none" stroke="#f7f700" stroke-width="1.8"/>
<path d="M1196.7 417.6 L1201.6 417.6" fill="none" stroke="#f7f700" stroke-width="0.9"/>
<path d="M1191.7 414.6 L1191.7 417.6" fill="none" stroke="#f7f700" stroke-width="1"/>
<rect x="1232.4" y="403.7" width="12.5" height="14.7" fill="none" stroke="#fafa50" stroke-width="0.9"/>
<path d="M1233.3 404.5 L1244.1 417.5 M1244.1 404.5 L1233.3 417.5 M1245.8 406.3 L1247.4 406.3 L1247.4 415.0 L1245.8 415.0" fill="none" stroke="#fafa70" stroke-width="0.8"/>
<path d="M1182.5 429.1 L1182.5 439.1 M1189.2 435.0 L1189.2 443.3" fill="none" stroke="#1fdc1f" stroke-width="1.4"/>
<path d="M1185.0 434.1 L1185.0 442.5" fill="none" stroke="#f7f700" stroke-width="1.5"/>
<path d="M1184.7 430.3 L1189.2 430.3" fill="none" stroke="#ff9c9c" stroke-width="0.8"/>
<rect x="1181.3" y="443.0" width="7.0" height="1.7" fill="#111" stroke="#111" stroke-width="0.1"/>
<path d="M1203.3 435.0 L1207.5 444.1" fill="none" stroke="#f7f700" stroke-width="0.9" stroke-dasharray="2 1.5"/>
<rect x="1198.0" y="444.5" width="5.7" height="3.0" fill="none" stroke="#f7f700" stroke-width="0.9"/>
<rect x="1208.3" y="443.6" width="4.2" height="3.8" fill="none" stroke="#19d0c0" stroke-width="1"/>
<path d="M1180.0 455.3 L1186.7 455.3" fill="none" stroke="#ff9cff" stroke-width="0.9"/>
<path d="M1180.0 461.6 L1185.8 473.3" fill="none" stroke="#f7f700" stroke-width="0.9" stroke-dasharray="2 1.5"/>
<path d="M1185.8 474.9 L1185.8 479.1" fill="none" stroke="#1fdc1f" stroke-width="0.9"/>
<rect x="1285.7" y="455.3" width="29.1" height="50.9" fill="none" stroke="#ff9cff" stroke-width="0.8"/>
<path d="M1286.6 455.8 L1314.0 505.7 M1314.0 455.8 L1286.6 505.7" fill="none" stroke="#ff8cff" stroke-width="0.8"/>
<rect x="1282.4" y="492.4" width="6.7" height="3.3" fill="none" stroke="#666" stroke-width="0.8"/>
<path d="M1282.4 495.7 L1282.4 506.6 L1285.7 508.6 L1289.1 505.7 L1289.1 495.7 M1284.1 493.2 L1284.1 499.1 M1287.4 493.2 L1287.4 499.1" fill="none" stroke="#777" stroke-width="0.8"/>
<path d="M1326.2 472.1 L1334.8 472.1 L1334.8 509.9" fill="none" stroke="#f56cf0" stroke-width="1"/>
<path d="M1299.9 509.6 L1338.2 509.6" fill="none" stroke="#a392f6" stroke-width="1.3"/>
<path d="M1339.0 511.6 L1369.8 512.4 L1372.8 518.2" fill="none" stroke="#d0c6fc" stroke-width="0.9"/>
<path d="M1354.0 488.2 L1363.2 488.2" fill="none" stroke="#ff5c5c" stroke-width="1"/>
<rect x="1338.2" y="461.6" width="4.0" height="8.3" fill="none" stroke="#555" stroke-width="0.9"/>
<path d="M1340.2 462.4 L1340.2 469.1" fill="none" stroke="#555" stroke-width="0.9"/>
<rect x="1366.6" y="460.4" width="4.0" height="8.3" fill="none" stroke="#555" stroke-width="0.9"/>
<path d="M1368.6 461.3 L1368.6 467.9" fill="none" stroke="#555" stroke-width="0.9"/>
<rect x="1338.2" y="494.1" width="4.0" height="8.3" fill="none" stroke="#555" stroke-width="0.9"/>
<path d="M1340.2 494.9 L1340.2 501.6" fill="none" stroke="#555" stroke-width="0.9"/>
<rect x="1366.6" y="494.9" width="4.0" height="8.3" fill="none" stroke="#555" stroke-width="0.9"/>
<path d="M1368.6 495.7 L1368.6 502.4" fill="none" stroke="#555" stroke-width="0.9"/>
<path d="M1372.8 459.1 L1372.8 543.2" fill="none" stroke="#a392f6" stroke-width="1.2"/>
<path d="M1400.1 459.1 L1400.1 543.2" fill="none" stroke="#d0c6fc" stroke-width="0.9"/>
<path d="M1445.6 459.1 L1445.6 543.2" fill="none" stroke="#a392f6" stroke-width="1.3"/>
<path d="M1481.7 459.1 L1481.7 543.2" fill="none" stroke="#d0c6fc" stroke-width="0.9"/>
<path d="M1400.1 543.2 L1481.7 543.2" fill="none" stroke="#a392f6" stroke-width="1.3"/>
<rect x="1402.3" y="464.9" width="38.3" height="18.3" fill="none" stroke="#8a8a8a" stroke-width="0.9"/>
<rect x="1402.3" y="494.4" width="38.3" height="18.3" fill="none" stroke="#8a8a8a" stroke-width="0.9"/>
<rect x="1406.4" y="523.2" width="34.1" height="7.5" fill="none" stroke="#8a8a8a" stroke-width="0.9"/>
<path d="M1413.9 468.3 L1430.6 468.3 M1420.6 471.9 L1426.4 471.9 M1410.6 479.4 L1432.2 479.4 M1413.1 497.4 L1429.8 497.4 M1418.1 502.4 L1428.1 502.4 M1410.6 509.1 L1432.2 509.1 M1412.3 524.0 L1434.7 524.0 M1422.3 527.4 L1429.8 527.4" fill="none" stroke="#9a9a9a" stroke-width="0.9" stroke-dasharray="1.2 0.8"/>
<rect x="1483.4" y="446.6" width="18.3" height="14.2" fill="none" stroke="#1ea6e6" stroke-width="1.3"/>
<path d="M1486.4 449.1 L1486.4 459.1 L1498.0 459.1" fill="none" stroke="#fafa70" stroke-width="0.9"/>
<path d="M1293.2 543.2 L1372.8 543.2" fill="none" stroke="#a392f6" stroke-width="1.2"/>
<path d="M1316.5 539.0 L1316.5 533.2 L1345.7 533.2" fill="none" stroke="#1fdc1f" stroke-width="1"/>
<path d="M1322.4 533.2 L1322.4 539.0 M1328.2 533.2 L1328.2 539.0 M1334.8 533.2 L1334.8 539.0 M1340.7 533.2 L1340.7 539.0" fill="none" stroke="#1fdc1f" stroke-width="1"/>
<path d="M1307.4 543.2 L1307.4 531.5 L1309.9 529.9" fill="none" stroke="#d0c6fc" stroke-width="0.9"/>
<path d="M1269.9 551.5 L1290.7 551.5" fill="none" stroke="#ff8c8c" stroke-width="0.9"/>
<path d="M1293.2 543.2 L1293.2 551.5 L1288.2 555.7" fill="none" stroke="#a392f6" stroke-width="0.8" stroke-dasharray="2 1.5"/>
<path d="M1188.3 557.3 L1464.7 557.3" fill="none" stroke="#a392f6" stroke-width="1.2"/>
<path d="M1188.3 561.2 L1446.4 561.2 L1446.4 557.3" fill="none" stroke="#f7f700" stroke-width="1.1"/>
<path d="M1220.8 561.2 L1220.8 562.8 M1246.6 559.0 L1246.6 561.2 M1296.6 561.2 L1296.6 562.8 M1313.2 559.0 L1313.2 561.2 M1353.2 561.2 L1353.2 562.8 M1379.0 559.0 L1379.0 561.2 M1427.3 561.2 L1427.3 562.8" fill="none" stroke="#f7f700" stroke-width="0.8"/>
<path d="M1372.8 543.2 L1368.1 553.2" fill="none" stroke="#a392f6" stroke-width="0.8" stroke-dasharray="2 1.5"/>
<path d="M1463.1 550.2 L1481.4 550.2" fill="none" stroke="#ffb4b4" stroke-width="0.8"/>
<path d="M1482.2 548.2 L1486.4 551.5 L1482.2 554.0" fill="none" stroke="#a392f6" stroke-width="0.9"/>
<path d="M1468.9 557.3 L1471.7 554.5 M1207.5 421.6 L1210.3 418.6 M1294.1 552.3 L1296.6 550.7 M1370.6 531.5 L1374.0 534.5 M1463.1 544.0 L1465.0 542.4" fill="none" stroke="#1fdc1f" stroke-width="0.8"/>
<path d="M1294.9 556.5 L1298.2 559.8 M1298.2 556.5 L1294.9 559.8 M1351.5 556.5 L1354.8 559.8 M1354.8 556.5 L1351.5 559.8 M1425.1 556.5 L1428.4 559.8 M1428.4 556.5 L1425.1 559.8 M1481.7 556.5 L1485.0 559.8 M1485.0 556.5 L1481.7 559.8" fill="none" stroke="#1fdc1f" stroke-width="0.8"/>
<path d="M1484.4 559.0 L1484.4 562.8" fill="none" stroke="#f7f700" stroke-width="0.9"/>
<text x="1180.8" y="529.5" font-size="4" fill="#c040c0" font-family="Liberation Sans, sans-serif">灯</text>
<text x="1180.8" y="552.8" font-size="5" fill="#c040c0" font-family="Liberation Sans, sans-serif">A</text>
<path d="M1515.4 480.1 L1515.4 544.2" fill="none" stroke="#a392f6" stroke-width="0.9"/>
<path d="M1514.9 459.2 L1564.7 459.2" fill="none" stroke="#d0c6fc" stroke-width="0.9"/>
<path d="M1514.9 480.4 L1564.7 480.4 M1514.9 501.3 L1564.7 501.3 M1514.9 522.3 L1564.7 522.3 M1514.9 543.4 L1564.7 543.4" fill="none" stroke="#a392f6" stroke-width="1"/>
<rect x="1515.4" y="476.6" width="22.4" height="14.9" fill="none" stroke="#777" stroke-width="0.9"/>
<rect x="1516.3" y="481.2" width="5.8" height="9.1" fill="#9a9a9a" stroke="#888" stroke-width="0.1"/>
<rect x="1540.3" y="521.8" width="5.8" height="14.1" fill="#a8a8a8" stroke="#888" stroke-width="0.1"/>
<path d="M1517.9 480.4 L1537.0 480.4 M1521.2 477.9 L1521.2 490.3 M1515.4 485.4 L1526.2 485.4 M1526.2 482.9 L1537.0 482.9 L1537.0 489.5 L1526.2 489.5 M1517.1 482.1 L1520.4 482.1 L1520.4 487.9 L1517.1 487.9" fill="none" stroke="#777" stroke-width="0.8"/>
<rect x="1525.4" y="520.5" width="35.2" height="16.2" fill="none" stroke="#777" stroke-width="0.9"/>
<path d="M1526.2 524.3 L1539.5 524.3 M1526.2 530.1 L1539.5 530.1 M1540.3 521.0 L1540.3 535.9 M1546.1 526.0 L1546.1 535.1 L1559.4 535.1 M1547.8 527.6 L1559.4 527.6 M1534.5 526.0 L1534.5 534.3 M1549.4 531.0 L1556.1 532.6" fill="none" stroke="#777" stroke-width="0.8"/>
<path d="M1505.5 557.2 L1508.0 560.8 L1542.8 560.8 L1546.1 557.5" fill="none" stroke="#a392f6" stroke-width="0.9"/>
<path d="M1512.1 558.3 L1512.1 547.5 L1514.6 545.6" fill="none" stroke="#d0c6fc" stroke-width="0.9"/>
<path d="M1481.8 556.7 L1485.1 560.0 M1485.1 556.7 L1481.8 560.0 M1550.3 556.7 L1553.6 560.0 M1553.6 556.7 L1550.3 560.0 M1525.4 561.6 L1527.9 559.2 M1515.4 549.2 L1517.9 552.5" fill="none" stroke="#1fdc1f" stroke-width="0.8"/>
<path d="M1484.4 559.2 L1484.4 562.5 M1551.4 559.2 L1551.4 562.5" fill="none" stroke="#f7f700" stroke-width="1"/>
<path d="M1542.8 513.7 L1551.9 513.7" fill="none" stroke="#ff8c8c" stroke-width="0.9"/>
<path d="M1554.4 560.5 L1564.4 560.5" fill="none" stroke="#d0c6fc" stroke-width="0.8"/>
<path d="M989.5 575.0 L989.5 755.0" fill="none" stroke="#a392f6" stroke-width="1.2"/>
<path d="M989.5 716.5 L1006.5 716.5" fill="none" stroke="#d0c6fc" stroke-width="0.9"/>
<path d="M1051.5 575.0 L1051.5 638.3" fill="none" stroke="#a392f6" stroke-width="1"/>
<path d="M1051.5 592.5 L1051.5 601.6 M1051.5 628.3 L1051.5 637.4" fill="none" stroke="#1fdc1f" stroke-width="1.1"/>
<path d="M1041.5 575.0 L1041.5 653.3" fill="none" stroke="#eaf8fc" stroke-width="0.9"/>
<path d="M1088.9 577.5 L1088.9 624.1" fill="none" stroke="#a392f6" stroke-width="1"/>
<path d="M1123.6 571.0 L1112.7 579.3 L1112.7 649.9" fill="none" stroke="#a392f6" stroke-width="1"/>
<path d="M1115.6 565.8 L1115.6 578.7" fill="none" stroke="#5fe0f0" stroke-width="1"/>
<path d="M1104.4 629.9 L1104.4 643.3" fill="none" stroke="#5fe0f0" stroke-width="1"/>
<path d="M1064.0 650.3 L1113.1 650.3" fill="none" stroke="#d0c6fc" stroke-width="0.9"/>
<path d="M1063.1 646.6 L1063.1 654.9" fill="none" stroke="#1fdc1f" stroke-width="1.1"/>
<text x="1065.6" y="660.7" font-size="4.6" fill="#ff8080" font-family="Liberation Sans, sans-serif">A-2#疏散指示照明配电箱</text>
<path d="M1113.1 650.3 L1111.4 658.3 L1111.4 669.1" fill="none" stroke="#d0c6fc" stroke-width="0.9"/>
<path d="M1113.9 650.8 L1126.4 664.9" fill="none" stroke="#a392f6" stroke-width="0.8" stroke-dasharray="2 1.5"/>
<path d="M1020.7 669.4 L1116.4 669.4" fill="none" stroke="#a392f6" stroke-width="1"/>
<path d="M1057.8 673.2 L1057.8 713.2" fill="none" stroke="#d0c6fc" stroke-width="0.9"/>
<path d="M1013.2 690.2 L1061.5 690.2" fill="none" stroke="#a392f6" stroke-width="1"/>
<path d="M1020.2 694.9 L1020.2 704.0" fill="none" stroke="#5fe0f0" stroke-width="1"/>
<path d="M1077.3 685.2 L1077.3 703.5 M1097.3 685.2 L1097.3 703.5" fill="none" stroke="#a392f6" stroke-width="0.9"/>
<path d="M1082.3 704.0 L1112.2 704.0" fill="none" stroke="#d0c6fc" stroke-width="0.8"/>
<path d="M1109.4 706.5 L1109.4 717.4" fill="none" stroke="#a392f6" stroke-width="1"/>
<path d="M1129.7 575.0 L1129.7 755.0" fill="none" stroke="#a392f6" stroke-width="1"/>
<path d="M1129.7 575.0 L1129.7 586.7 M1129.7 608.3 L1129.7 616.6 M1129.7 636.6 L1129.7 644.9 M1129.7 665.7 L1129.7 674.9 M1129.7 691.6 L1129.7 701.5 M1129.7 708.2 L1129.7 713.2 M1129.7 728.2 L1129.7 736.5 M1129.7 751.5 L1129.7 755.0" fill="none" stroke="#1fdc1f" stroke-width="1.1"/>
<path d="M1127.7 580.8 L1131.7 580.8 M1127.7 612.5 L1131.7 612.5 M1127.7 640.8 L1131.7 640.8 M1127.7 669.9 L1131.7 669.9 M1127.7 696.5 L1131.7 696.5 M1127.7 732.3 L1131.7 732.3" fill="none" stroke="#1fdc1f" stroke-width="0.7"/>
<path d="M1147.7 575.0 L1147.7 679.9" fill="none" stroke="#f7f700" stroke-width="1.5"/>
<path d="M1147.7 718.2 L1147.7 755.0" fill="none" stroke="#f7f700" stroke-width="1.5"/>
<path d="M1133.1 575.0 L1133.1 683.2" fill="none" stroke="#fbfb9a" stroke-width="0.9"/>
<path d="M1166.4 714.0 L1151.4 741.5" fill="none" stroke="#f7f700" stroke-width="0.9" stroke-dasharray="2 1.5"/>
<path d="M1149.7 583.3 L1164.7 582.5" fill="none" stroke="#a392f6" stroke-width="0.8"/>
<path d="M1155.5 586.3 L1179.7 586.3" fill="none" stroke="#d0c6fc" stroke-width="0.9"/>
<path d="M1155.5 586.3 L1151.4 601.6" fill="none" stroke="#a392f6" stroke-width="0.8" stroke-dasharray="2 1.5"/>
<path d="M1162.7 583.3 L1162.7 664.9" fill="none" stroke="#d0c6fc" stroke-width="0.9"/>
<path d="M1151.4 636.6 L1164.7 643.3 L1179.7 643.3" fill="none" stroke="#a392f6" stroke-width="1"/>
<path d="M1151.4 669.1 L1159.7 671.6 L1179.7 671.6" fill="none" stroke="#d0c6fc" stroke-width="0.9"/>
<path d="M1160.0 666.6 L1160.0 703.2" fill="none" stroke="#1fdc1f" stroke-width="0.8"/>
<path d="M1150.5 702.4 L1155.5 704.5 L1179.7 704.5" fill="none" stroke="#a392f6" stroke-width="1"/>
<text x="1176.0" y="652.4" font-size="4.6" fill="#ff8080" font-family="Liberation Sans, sans-serif">h</text>
<path d="M1015.7 728.2 L1126.4 728.2" fill="none" stroke="#a392f6" stroke-width="1.1"/>
<path d="M991.5 733.2 L1004.9 727.3 L1013.2 728.2" fill="none" stroke="#a392f6" stroke-width="0.8" stroke-dasharray="2 1.5"/>
<path d="M991.5 733.5 L1006.5 733.5" fill="none" stroke="#d0c6fc" stroke-width="0.8"/>
<path d="M1020.7 728.2 L1020.7 755.0 M1043.6 729.8 L1043.6 755.0" fill="none" stroke="#a392f6" stroke-width="1"/>
<path d="M1066.5 729.8 L1066.5 755.0 M1113.9 729.8 L1113.9 755.0" fill="none" stroke="#d0c6fc" stroke-width="0.9"/>
<path d="M1104.8 722.4 L1122.2 722.4" fill="none" stroke="#ffc4c4" stroke-width="0.8"/>
<path d="M1014.8 686.9 L1016.5 684.1 L1019.0 686.9 M1034.8 686.9 L1036.5 684.1 L1039.0 686.9 M1054.5 686.9 L1056.1 684.1 L1058.1 686.9 M1075.6 706.5 L1077.3 709.0 L1078.9 706.5 M1077.3 709.0 L1077.3 710.7 M1095.6 706.5 L1097.3 709.0 L1098.9 706.5 M1097.3 709.0 L1097.3 710.7 M1116.4 706.5 L1118.1 709.0 L1119.7 706.5 M995.7 716.5 L998.2 714.9 M1004.0 714.0 L1008.2 718.2 M988.2 629.1 L990.7 631.6 M988.2 685.7 L991.5 688.6 M1016.5 696.2 L1019.8 699.0 M1034.8 703.2 L1038.2 706.5 M1053.1 704.0 L1056.5 708.2 M1112.2 585.0 L1114.7 588.3 M1111.4 613.3 L1114.7 615.8 M1115.6 698.2 L1118.9 700.7" fill="none" stroke="#1fdc1f" stroke-width="0.8"/>
<path d="M1170.0 576.3 L1295.7 576.3 L1298.2 579.2 L1306.5 579.2 L1309.0 577.0" fill="none" stroke="#a392f6" stroke-width="1"/>
<path d="M1341.1 577.5 L1343.1 579.7 L1350.6 579.7 L1352.8 577.0" fill="none" stroke="#d0c6fc" stroke-width="0.9"/>
<path d="M1391.4 577.0 L1393.1 579.5 L1438.9 579.5 L1440.5 577.0" fill="none" stroke="#d0c6fc" stroke-width="0.9"/>
<path d="M1192.4 580.7 L1248.2 580.7 L1248.2 646.6 L1239.9 646.6" fill="none" stroke="#2aa0dc" stroke-width="2.3"/>
<path d="M1192.4 580.7 L1248.2 580.7 L1248.2 646.6 L1239.9 646.6" fill="none" stroke="#e8f6fd" stroke-width="0.8" stroke-dasharray="1.1 1.1"/>
<path d="M1185.6 602.5 L1185.6 655.3 L1223.3 655.3" fill="none" stroke="#2aa0dc" stroke-width="2.3"/>
<path d="M1185.6 602.5 L1185.6 655.3 L1223.3 655.3" fill="none" stroke="#e8f6fd" stroke-width="0.8" stroke-dasharray="1.1 1.1"/>
<rect x="1222.4" y="644.6" width="18.3" height="13.7" fill="none" stroke="#1ea6e6" stroke-width="1"/>
<path d="M1190.0 603.6 L1218.6 603.6 L1218.6 641.6" fill="none" stroke="#c9ae7c" stroke-width="1.1"/>
<path d="M1212.4 636.3 L1212.4 645.8 M1217.9 636.3 L1217.9 645.8 M1212.4 641.6 L1217.9 641.6 M1211.6 645.8 L1218.8 645.8" fill="none" stroke="#1ea6e6" stroke-width="1.1"/>
<path d="M1207.4 592.1 L1244.1 592.1" fill="none" stroke="#a392f6" stroke-width="1"/>
<path d="M1244.1 590.0 L1244.1 644.9" fill="none" stroke="#a392f6" stroke-width="1"/>
<path d="M1204.9 596.3 L1221.6 601.6" fill="none" stroke="#a392f6" stroke-width="0.8" stroke-dasharray="2 1.5"/>
<path d="M1221.6 601.6 L1221.6 643.3" fill="none" stroke="#d0c6fc" stroke-width="0.9"/>
<path d="M1187.5 588.3 L1187.5 602.5" fill="none" stroke="#d0c6fc" stroke-width="0.9"/>
<path d="M1180.0 586.3 L1204.9 586.3 L1206.6 588.3" fill="none" stroke="#d0c6fc" stroke-width="0.9"/>
<path d="M1180.0 643.3 L1221.6 643.3" fill="none" stroke="#a392f6" stroke-width="1.2"/>
<path d="M1244.1 588.3 L1244.1 596.6 M1244.1 639.9 L1244.1 647.4 M1221.6 613.3 L1221.6 623.3 M1187.5 588.3 L1187.5 596.6 M1162.5 613.3 L1162.5 623.3" fill="none" stroke="#1fdc1f" stroke-width="1.1"/>
<path d="M1220.8 603.3 L1223.3 606.6 M1220.8 628.3 L1223.3 631.6 M1162.5 599.1 L1164.6 601.6 M1162.5 629.1 L1164.6 631.6 M1176.6 644.1 L1179.1 641.9 M1208.3 699.0 L1211.6 696.5" fill="none" stroke="#1fdc1f" stroke-width="0.7"/>
<text x="1175.8" y="652.4" font-size="4.6" fill="#ff8080" font-family="Liberation Sans, sans-serif">A-1#疏散指示照明配电箱</text>
<path d="M1225.7 654.6 L1237.4 654.6" fill="none" stroke="#fafa70" stroke-width="0.9"/>
<path d="M1160.0 676.2 L1160.0 693.2 M1180.0 676.2 L1180.0 693.2" fill="none" stroke="#d0c6fc" stroke-width="0.9"/>
<path d="M1199.6 676.2 L1199.6 693.2 M1239.4 676.2 L1239.4 693.2" fill="none" stroke="#e6e0fd" stroke-width="0.9"/>
<path d="M1219.6 676.2 L1219.6 693.2" fill="none" stroke="#a392f6" stroke-width="1.1"/>
<path d="M1160.0 671.2 L1180.0 671.2" fill="none" stroke="#d0c6fc" stroke-width="0.8"/>
<path d="M1180.0 704.5 L1199.1 704.5" fill="none" stroke="#a392f6" stroke-width="1"/>
<path d="M1188.3 729.8 L1188.3 739.0 M1188.3 734.0 L1190.0 734.0" fill="none" stroke="#1fdc1f" stroke-width="1"/>
<path d="M778.4 575.0 L778.4 755.0" fill="none" stroke="#a392f6" stroke-width="1.3"/>
<path d="M777.8 575.0 L780.6 577.5 M777.3 636.9 L779.8 639.6 M777.3 701.9 L779.8 704.5" fill="none" stroke="#1fdc1f" stroke-width="0.7"/>
<path d="M778.4 755.0 L778.4 821.6" fill="none" stroke="#a392f6" stroke-width="1.3"/>
<path d="M779.8 820.8 L779.8 813.3 L803.1 813.3" fill="none" stroke="#d0c6fc" stroke-width="0.9"/>
<path d="M803.1 812.4 L859.7 812.4" fill="none" stroke="#a392f6" stroke-width="0.9"/>
<path d="M779.8 874.2 L826.7 874.2" fill="none" stroke="#a392f6" stroke-width="1.1"/>
<path d="M826.7 874.2 L826.7 887.4" fill="none" stroke="#d0c6fc" stroke-width="0.8"/>
<path d="M829.7 888.2 L859.7 888.2" fill="none" stroke="#a392f6" stroke-width="1.1"/>
<path d="M696.5 880.2 L773.1 880.2" fill="none" stroke="#ececec" stroke-width="0.8"/>
<path d="M797.2 815.3 L801.1 811.6 M777.8 757.0 L779.8 760.0" fill="none" stroke="#1fdc1f" stroke-width="0.8"/>
<path d="M989.5 755.0 L989.5 798.3" fill="none" stroke="#a392f6" stroke-width="1.2"/>
<path d="M860.0 812.4 L971.6 812.4" fill="none" stroke="#a392f6" stroke-width="0.9"/>
<path d="M971.6 813.3 L981.5 813.3 L985.7 809.9" fill="none" stroke="#d0c6fc" stroke-width="0.9"/>
<path d="M986.5 809.9 L986.5 883.2" fill="none" stroke="#a6e26a" stroke-width="1"/>
<path d="M989.9 883.5 L989.9 890.2 M987.9 883.5 L991.9 890.2 M991.9 883.5 L987.9 890.2" fill="none" stroke="#1ea6e6" stroke-width="1"/>
<path d="M860.0 888.2 L989.9 888.2" fill="none" stroke="#a392f6" stroke-width="1.2"/>
<path d="M863.3 814.9 L867.0 811.3 M933.3 814.6 L936.9 811.6 M982.4 813.3 L985.2 810.8" fill="none" stroke="#1fdc1f" stroke-width="0.8"/>
<path d="M1007.4 769.2 L1007.4 783.6 M1025.7 769.2 L1025.7 783.6" fill="none" stroke="#1ea6e6" stroke-width="1.1"/>
<rect x="1009.4" y="770.8" width="14.3" height="11.3" fill="none" stroke="#7fd0f0" stroke-width="1"/>
<path d="M1010.7 772.0 L1022.3 772.0 M1010.7 781.0 L1022.3 781.0" fill="none" stroke="#f7f700" stroke-width="1.1"/>
<path d="M1020.7 755.0 L1020.7 774.1 M1043.6 755.0 L1043.6 774.1" fill="none" stroke="#a392f6" stroke-width="1"/>
<path d="M1066.5 755.0 L1066.5 774.1" fill="none" stroke="#d0c6fc" stroke-width="0.9"/>
<path d="M1113.9 755.0 L1113.9 774.1" fill="none" stroke="#e6e0fd" stroke-width="0.9"/>
<path d="M1071.5 814.1 L1071.5 816.6 M1080.6 814.1 L1080.6 816.6 M1149.7 875.5 L1149.7 877.9 M1158.9 875.5 L1158.9 877.9 M1171.4 875.5 L1171.4 877.9 M1149.7 895.9 L1149.7 897.9 M1158.9 895.9 L1158.9 897.9 M1171.4 895.9 L1171.4 897.9 M1016.5 774.3 L1016.5 776.3 M1024.8 774.3 L1024.8 776.3 M1039.5 774.3 L1039.5 776.3 M1047.8 774.3 L1047.8 776.3 M1062.3 774.3 L1062.3 776.3 M1071.5 774.3 L1071.5 776.3 M1085.6 774.3 L1085.6 776.3 M1094.8 774.3 L1094.8 776.3 M1108.4 774.3 L1108.4 776.3 M1117.7 774.3 L1117.7 776.3" fill="none" stroke="#1fdc1f" stroke-width="0.8"/>
<text x="1049.0" y="759.7" font-size="4.4" fill="#ff8080" font-family="Liberation Sans, sans-serif">A-2#应急照明集中电源配电箱</text>
<text x="1156.4" y="889.0" font-size="4.4" fill="#ff8080" font-family="Liberation Sans, sans-serif">A-3#疏散指示照明配电箱</text>
<path d="M1113.4 781.6 L1120.6 781.6 M1113.4 783.6 L1120.6 783.6 M1115.1 781.6 L1114.4 785.8 M1118.9 781.6 L1119.7 785.8 M1114.7 794.1 L1114.7 788.6 L1119.4 788.6 L1119.4 794.1" fill="none" stroke="#1ea6e6" stroke-width="1"/>
<path d="M1010.2 795.5 L1124.7 795.5" fill="none" stroke="#5fe0f0" stroke-width="1"/>
<rect x="1007.4" y="809.4" width="18.3" height="16.3" fill="none" stroke="#1ea6e6" stroke-width="1.1"/>
<rect x="1009.4" y="811.6" width="14.7" height="12.0" fill="none" stroke="#1ea6e6" stroke-width="1"/>
<path d="M1010.7 813.3 L1022.3 813.3 M1010.7 822.4 L1022.3 822.4" fill="none" stroke="#f7f700" stroke-width="1.1"/>
<path d="M1025.7 814.9 L1032.3 814.9 M1025.7 817.9 L1031.5 817.9 M1031.5 814.9 L1031.5 819.9 M1025.7 822.4 L1030.7 822.4 M1025.7 826.3 L1031.2 826.3" fill="none" stroke="#1ea6e6" stroke-width="1"/>
<path d="M1005.7 864.1 L1005.7 885.4 L1017.3 885.4 L1020.7 887.7" fill="none" stroke="#a392f6" stroke-width="0.9"/>
<path d="M1081.4 888.2 L1081.4 922.8" fill="none" stroke="#a392f6" stroke-width="0.9"/>
<path d="M1113.1 915.7 L1120.6 915.7 L1120.6 922.8" fill="none" stroke="#5fe0f0" stroke-width="1.1"/>
<path d="M1123.9 922.3 L1134.7 914.0" fill="none" stroke="#a392f6" stroke-width="0.9"/>
<path d="M1136.4 913.2 L1179.7 913.2" fill="none" stroke="#a050d0" stroke-width="1.2"/>
<path d="M1129.7 755.0 L1129.7 783.3" fill="none" stroke="#a392f6" stroke-width="1"/>
<path d="M1129.7 783.3 L1141.4 803.3" fill="none" stroke="#a392f6" stroke-width="0.9" stroke-dasharray="1.5 1"/>
<path d="M1141.4 803.3 L1179.7 803.3" fill="none" stroke="#a392f6" stroke-width="1"/>
<path d="M1129.7 775.0 L1129.7 782.5" fill="none" stroke="#1fdc1f" stroke-width="1.1"/>
<path d="M1147.7 755.0 L1147.7 783.3" fill="none" stroke="#f7f700" stroke-width="1.5"/>
<path d="M1153.0 755.0 L1164.7 780.0" fill="none" stroke="#f7f700" stroke-width="0.9" stroke-dasharray="2 1.5"/>
<path d="M1173.0 780.0 L1179.7 788.3" fill="none" stroke="#f7f700" stroke-width="0.9"/>
<path d="M1164.7 781.6 L1164.7 790.8 L1179.7 790.8" fill="none" stroke="#f8f860" stroke-width="0.9"/>
<path d="M1124.7 815.8 L1143.1 807.4" fill="none" stroke="#f7f700" stroke-width="1.2" stroke-dasharray="3 1.2"/>
<path d="M1158.9 850.2 L1179.7 850.2" fill="none" stroke="#f7f700" stroke-width="1.3"/>
<path d="M1175.5 821.6 L1175.5 871.6" fill="none" stroke="#fdfdc8" stroke-width="0.8"/>
<rect x="1136.1" y="820.3" width="31.5" height="17.5" fill="#646464" stroke="#646464" stroke-width="0.1"/>
<text x="1138.4" y="831.9" font-size="6.8" fill="#a6d42c" font-family="Liberation Sans, sans-serif" font-weight="bold" textLength="27.5" lengthAdjust="spacingAndGlyphs">安全出口</text>
<rect x="1136.1" y="852.4" width="31.5" height="17.5" fill="#646464" stroke="#646464" stroke-width="0.1"/>
<text x="1138.4" y="864.1" font-size="6.8" fill="#a6d42c" font-family="Liberation Sans, sans-serif" font-weight="bold" textLength="27.5" lengthAdjust="spacingAndGlyphs">安全出口</text>
<path d="M1173.3 779.1 L1188.3 766.7" fill="none" stroke="#f7f700" stroke-width="0.9"/>
<path d="M1188.3 758.3 L1188.3 766.7" fill="none" stroke="#1fdc1f" stroke-width="1.1"/>
<path d="M1172.5 780.0 L1178.3 789.1 L1239.9 789.1" fill="none" stroke="#f7f700" stroke-width="1.1"/>
<path d="M1180.0 786.3 L1200.8 786.3" fill="none" stroke="#f7f700" stroke-width="0.9"/>
<path d="M1164.6 788.3 L1164.6 791.6 L1239.9 791.6" fill="none" stroke="#f8f860" stroke-width="0.8"/>
<path d="M1244.9 782.5 L1244.9 790.8 M1239.9 790.8 L1246.6 790.8" fill="none" stroke="#f7f700" stroke-width="0.9"/>
<path d="M1226.6 780.8 L1249.1 780.8" fill="none" stroke="#222" stroke-width="1" stroke-dasharray="1 0.9"/>
<path d="M1226.6 782.1 L1249.1 782.1" fill="none" stroke="#1fdc1f" stroke-width="0.7"/>
<path d="M1225.7 787.0 L1244.1 787.0" fill="none" stroke="#ffb4b4" stroke-width="0.8"/>
<path d="M1180.0 803.3 L1228.2 803.3 L1228.2 913.2" fill="none" stroke="#a392f6" stroke-width="0.9"/>
<path d="M1207.4 801.6 L1210.8 805.0 M1210.8 801.6 L1207.4 805.0 M1227.4 816.3 L1230.7 819.6 M1230.7 816.3 L1227.4 819.6" fill="none" stroke="#1fdc1f" stroke-width="0.8"/>
<path d="M1216.1 809.1 L1216.1 818.3 M1216.1 824.6 L1216.1 833.3 M1216.1 838.3 L1216.1 847.4 M1216.1 852.4 L1216.1 861.6" fill="none" stroke="#1fdc1f" stroke-width="1.7"/>
<path d="M1228.6 820.8 L1228.6 830.8 M1228.6 861.6 L1228.6 870.7 M1228.6 905.7 L1228.6 913.2 M1189.1 852.4 L1189.1 861.6" fill="none" stroke="#1fdc1f" stroke-width="1"/>
<path d="M1231.6 800.0 L1231.6 922.8" fill="none" stroke="#f8f860" stroke-width="0.9"/>
<path d="M1247.4 795.0 L1247.4 922.8" fill="none" stroke="#fcfcb0" stroke-width="0.9"/>
<path d="M1236.6 809.1 L1236.6 825.8" fill="none" stroke="#d0c6fc" stroke-width="0.8" stroke-dasharray="2 1.5"/>
<path d="M1234.9 816.3 L1269.9 816.3" fill="none" stroke="#ffb4b4" stroke-width="0.8"/>
<path d="M1217.4 856.2 L1224.9 853.2" fill="none" stroke="#f7f700" stroke-width="0.8"/>
<path d="M1194.1 809.9 L1194.1 819.1 M1180.8 820.8 L1190.0 817.4" fill="none" stroke="#f7f700" stroke-width="0.8"/>
<path d="M1206.6 877.4 L1206.6 895.7" fill="none" stroke="#f7f700" stroke-width="1.4"/>
<path d="M1213.3 896.5 L1224.1 896.5" fill="none" stroke="#f7f700" stroke-width="0.9"/>
<path d="M1140.0 913.2 L1177.5 913.2" fill="none" stroke="#a050d0" stroke-width="1.2"/>
<path d="M1177.5 914.0 L1180.0 917.3 L1222.4 917.3" fill="none" stroke="#a392f6" stroke-width="0.9"/>
<path d="M1203.3 917.3 L1203.3 922.8" fill="none" stroke="#a392f6" stroke-width="0.9"/>
<path d="M1233.6 902.4 L1233.6 922.8" fill="none" stroke="#a392f6" stroke-width="1"/>
<path d="M1234.1 907.3 L1270.7 907.3" fill="none" stroke="#ffd0d0" stroke-width="0.8"/>
<path d="M1259.9 915.3 L1302.3 915.3" fill="none" stroke="#a6e26a" stroke-width="1"/>
<path d="M1473.2 577.0 L1474.8 579.1 L1483.2 579.1" fill="none" stroke="#d0c6fc" stroke-width="0.8"/>
<path d="M1505.6 578.0 L1507.3 579.1 L1564.7 579.1" fill="none" stroke="#d0c6fc" stroke-width="0.9"/>
<path d="M1553.1 580.8 L1556.4 578.3" fill="none" stroke="#1fdc1f" stroke-width="0.7"/>
<rect x="580.9" y="429.6" width="5.4" height="2.6" fill="#3c4218"/><rect x="581.6" y="428.4" width="4" height="1.3" fill="#d8e000"/>
<rect x="608.6" y="431.6" width="5.4" height="2.6" fill="#3c4218"/><rect x="609.3" y="430.4" width="4" height="1.3" fill="#d8e000"/>
<rect x="638.5" y="417.4" width="5.4" height="2.6" fill="#3c4218"/><rect x="639.2" y="416.2" width="4" height="1.3" fill="#d8e000"/>
<rect x="637.7" y="437.9" width="5.4" height="2.6" fill="#3c4218"/><rect x="638.4" y="436.7" width="4" height="1.3" fill="#d8e000"/>
<rect x="748.4" y="418.2" width="5.4" height="2.6" fill="#3c4218"/><rect x="749.1" y="417.0" width="4" height="1.3" fill="#d8e000"/>
<rect x="827.5" y="419.1" width="5.4" height="2.6" fill="#3c4218"/><rect x="828.2" y="417.9" width="4" height="1.3" fill="#d8e000"/>
<rect x="775.7" y="503.2" width="5.4" height="2.6" fill="#3c4218"/><rect x="776.4" y="502.0" width="4" height="1.3" fill="#d8e000"/>
<rect x="775.4" y="546.8" width="5.4" height="2.6" fill="#3c4218"/><rect x="776.1" y="545.6" width="4" height="1.3" fill="#d8e000"/>
<rect x="577.8" y="440.7" width="7.6" height="4.2" fill="#5c6038"/><rect x="579.3" y="442.2" width="4.6" height="1" fill="#9aa04a"/>
<rect x="601.1" y="445.0" width="7.6" height="4.2" fill="#5c6038"/><rect x="602.6" y="446.5" width="4.6" height="1" fill="#9aa04a"/>
<rect x="614.1" y="442.9" width="7.6" height="4.2" fill="#5c6038"/><rect x="615.6" y="444.4" width="4.6" height="1" fill="#9aa04a"/>
<rect x="623.4" y="431.5" width="7.6" height="4.2" fill="#5c6038"/><rect x="624.9" y="433.0" width="4.6" height="1" fill="#9aa04a"/>
<rect x="738.0" y="445.5" width="7.6" height="4.2" fill="#5c6038"/><rect x="739.5" y="447.0" width="4.6" height="1" fill="#9aa04a"/>
<rect x="664.1" y="509.6" width="7.6" height="4.2" fill="#5c6038"/><rect x="665.6" y="511.1" width="4.6" height="1" fill="#9aa04a"/>
<path d="M663.2 418.9 L663.2 420.0 L673.2 420.0 L673.2 418.9 M688.2 418.9 L688.2 420.0 L697.3 420.0 L697.3 418.9 M712.3 418.9 L712.3 420.0 L721.5 420.0 L721.5 418.9 M693.2 442.2 L693.2 443.3 L702.3 443.3 L702.3 442.2 M716.5 442.2 L716.5 443.3 L724.8 443.3 L724.8 442.2 M689.9 512.4 L689.9 513.5 L699.0 513.5 L699.0 512.4 M714.0 512.4 L714.0 513.5 L724.0 513.5 L724.0 512.4 M734.8 512.4 L734.8 513.5 L744.0 513.5 L744.0 512.4" fill="none" stroke="#1fdc1f" stroke-width="1.2"/>
<path d="M711.5 469.4 L711.5 478.7 M710.2 469.4 L712.8 469.4 M710.2 478.7 L712.8 478.7 M739.8 469.4 L739.8 478.7 M738.5 469.4 L741.1 469.4 M738.5 478.7 L741.1 478.7" fill="none" stroke="#1fdc1f" stroke-width="1.1"/>
<circle cx="778.4" cy="449.4" r="1.3" fill="none" stroke="#1fdc1f" stroke-width="0.8"/>
<circle cx="672.4" cy="466.9" r="1.8" fill="none" stroke="#7a7a7a" stroke-width="0.8"/>
<circle cx="695.2" cy="467.8" r="1.8" fill="none" stroke="#7a7a7a" stroke-width="0.8"/>
<circle cx="727.6" cy="468.3" r="1.8" fill="none" stroke="#7a7a7a" stroke-width="0.8"/>
<path d="M1037.3 437.5 L1037.3 438.6 L1045.6 438.6 L1045.6 437.5 M1074.0 437.2 L1074.0 438.3 L1083.9 438.3 L1083.9 437.2 M1109.8 437.5 L1109.8 438.6 L1114.7 438.6 L1114.7 437.5 M1044.8 468.3 L1044.8 469.4 L1085.6 469.4 L1085.6 468.3 M1044.8 489.3 L1044.8 490.4 L1085.6 490.4 L1085.6 489.3 M1018.2 531.3 L1018.2 532.4 L1026.5 532.4 L1026.5 531.3 M1044.0 531.3 L1044.0 532.4 L1054.0 532.4 L1054.0 531.3 M1076.5 531.3 L1076.5 532.4 L1085.6 532.4 L1085.6 531.3 M1134.7 401.4 L1134.7 402.5 L1141.4 402.5 L1141.4 401.4 M1161.4 400.9 L1161.4 402.0 L1170.5 402.0 L1170.5 400.9 M1166.4 442.5 L1166.4 443.6 L1174.7 443.6 L1174.7 442.5 M1165.5 446.8 L1165.5 447.9 L1173.9 447.9 L1173.9 446.8 M1103.9 538.4 L1103.9 539.5 L1112.2 539.5 L1112.2 538.4" fill="none" stroke="#1fdc1f" stroke-width="1.2"/>
<circle cx="1030.2" cy="460.3" r="2.2" fill="none" stroke="#7a7a7a" stroke-width="0.8"/>
<circle cx="1066.0" cy="463.3" r="2.2" fill="none" stroke="#7a7a7a" stroke-width="0.8"/>
<circle cx="1101.4" cy="464.1" r="2.2" fill="none" stroke="#7a7a7a" stroke-width="0.8"/>
<rect x="1063.2" y="542.9" width="1.5" height="1.5" fill="#1fdc1f"/>
<rect x="1082.4" y="543.6" width="1.5" height="1.5" fill="#1fdc1f"/>
<rect x="1086.5" y="542.9" width="1.5" height="1.5" fill="#1fdc1f"/>
<rect x="1090.4" y="543.6" width="1.5" height="1.5" fill="#1fdc1f"/>
<rect x="1114.0" y="543.6" width="1.5" height="1.5" fill="#1fdc1f"/>
<path d="M1151.4 475.8 L1151.4 483.2 M1150.1 475.8 L1152.7 475.8 M1150.1 483.2 L1152.7 483.2 M1160.5 427.5 L1160.5 436.6 M1159.2 427.5 L1161.8 427.5 M1159.2 436.6 L1161.8 436.6" fill="none" stroke="#1fdc1f" stroke-width="1.1"/>
<rect x="1145.3" y="469.7" width="2.2" height="2.2" fill="#555"/>
<circle cx="1171.4" cy="522.9" r="1.4" fill="none" stroke="#1fdc1f" stroke-width="0.8"/>
<circle cx="1157.2" cy="543.7" r="1.4" fill="none" stroke="#1fdc1f" stroke-width="0.8"/>
<circle cx="1171.4" cy="543.7" r="1.4" fill="none" stroke="#1fdc1f" stroke-width="0.8"/>
<circle cx="989.5" cy="530.7" r="1.4" fill="none" stroke="#1fdc1f" stroke-width="0.8"/>
<rect x="1150.9" y="525.2" width="1.6" height="1.6" fill="#111"/>
<rect x="1150.9" y="546.9" width="1.6" height="1.6" fill="#111"/>
<rect x="1147.2" y="546.9" width="1.6" height="1.6" fill="#111"/>
<rect x="1123.9" y="554.5" width="1.6" height="1.6" fill="#111"/>
<circle cx="1130.1" cy="479.9" r="1.1" fill="none" stroke="#1fdc1f" stroke-width="0.8"/>
<circle cx="1130.1" cy="481.9" r="1.1" fill="none" stroke="#1fdc1f" stroke-width="0.8"/>
<rect x="886.8" y="417.9" width="5.4" height="2.6" fill="#3c4218"/><rect x="887.5" y="416.7" width="4" height="1.3" fill="#d8e000"/>
<rect x="952.2" y="418.7" width="5.4" height="2.6" fill="#3c4218"/><rect x="952.9" y="417.5" width="4" height="1.3" fill="#d8e000"/>
<rect x="988.8" y="466.2" width="5.4" height="2.6" fill="#3c4218"/><rect x="989.5" y="465.0" width="4" height="1.3" fill="#d8e000"/>
<rect x="1019.0" y="419.5" width="7.6" height="4.2" fill="#5c6038"/><rect x="1020.5" y="421.0" width="4.6" height="1" fill="#9aa04a"/>
<rect x="1083.0" y="416.2" width="7.6" height="4.2" fill="#5c6038"/><rect x="1084.5" y="417.7" width="4.6" height="1" fill="#9aa04a"/>
<rect x="1102.3" y="437.0" width="7.6" height="4.2" fill="#5c6038"/><rect x="1103.8" y="438.5" width="4.6" height="1" fill="#9aa04a"/>
<rect x="1123.8" y="414.0" width="7.6" height="4.2" fill="#5c6038"/><rect x="1125.3" y="415.5" width="4.6" height="1" fill="#9aa04a"/>
<rect x="1139.3" y="400.4" width="7.6" height="4.2" fill="#5c6038"/><rect x="1140.8" y="401.9" width="4.6" height="1" fill="#9aa04a"/>
<rect x="1149.6" y="427.0" width="7.6" height="4.2" fill="#5c6038"/><rect x="1151.1" y="428.5" width="4.6" height="1" fill="#9aa04a"/>
<rect x="1124.6" y="539.4" width="7.6" height="4.2" fill="#5c6038"/><rect x="1126.1" y="540.9" width="4.6" height="1" fill="#9aa04a"/>
<rect x="1154.2" y="520.6" width="7.6" height="4.2" fill="#5c6038"/><rect x="1155.7" y="522.1" width="4.6" height="1" fill="#9aa04a"/>
<rect x="1143.9" y="548.9" width="7.6" height="4.2" fill="#5c6038"/><rect x="1145.4" y="550.4" width="4.6" height="1" fill="#9aa04a"/>
<rect x="1159.6" y="556.9" width="7.6" height="4.2" fill="#5c6038"/><rect x="1161.1" y="558.4" width="4.6" height="1" fill="#9aa04a"/>
<rect x="1175.0" y="521.4" width="7.6" height="4.2" fill="#5c6038"/><rect x="1176.5" y="522.9" width="4.6" height="1" fill="#9aa04a"/>
<rect x="1175.0" y="556.9" width="7.6" height="4.2" fill="#5c6038"/><rect x="1176.5" y="558.4" width="4.6" height="1" fill="#9aa04a"/>
<path d="M1186.7 400.9 L1186.7 402.0 L1195.8 402.0 L1195.8 400.9 M1212.5 400.9 L1212.5 402.0 L1220.8 402.0 L1220.8 400.9 M1196.7 415.9 L1196.7 417.0 L1201.6 417.0 L1201.6 415.9 M1287.4 527.9 L1287.4 529.0 L1295.7 529.0 L1295.7 527.9 M1311.5 527.9 L1311.5 529.0 L1321.5 529.0 L1321.5 527.9 M1338.2 527.9 L1338.2 529.0 L1346.5 529.0 L1346.5 527.9 M1284.1 543.3 L1284.1 544.4 L1293.2 544.4 L1293.2 543.3 M1303.2 543.3 L1303.2 544.4 L1311.5 544.4 L1311.5 543.3 M1321.5 543.3 L1321.5 544.4 L1329.9 544.4 L1329.9 543.3 M1339.0 543.3 L1339.0 544.4 L1348.2 544.4 L1348.2 543.3 M1188.3 556.2 L1188.3 557.3 L1196.7 557.3 L1196.7 556.2 M1232.4 555.4 L1232.4 556.5 L1240.8 556.5 L1240.8 555.4 M1244.1 556.2 L1244.1 557.3 L1249.9 557.3 L1249.9 556.2 M1274.1 555.7 L1274.1 556.8 L1283.2 556.8 L1283.2 555.7 M1293.2 556.7 L1293.2 557.8 L1299.0 557.8 L1299.0 556.7 M1309.9 556.2 L1309.9 557.3 L1314.9 557.3 L1314.9 556.2 M1319.9 555.7 L1319.9 556.8 L1329.0 556.8 L1329.0 555.7 M1349.8 556.7 L1349.8 557.8 L1356.5 557.8 L1356.5 556.7 M1364.0 555.7 L1364.0 556.8 L1373.1 556.8 L1373.1 555.7 M1375.6 556.2 L1375.6 557.3 L1382.3 557.3 L1382.3 556.2 M1408.1 555.7 L1408.1 556.8 L1417.3 556.8 L1417.3 555.7 M1423.9 556.7 L1423.9 557.8 L1429.8 557.8 L1429.8 556.7 M1442.2 556.2 L1442.2 557.3 L1448.1 557.3 L1448.1 556.2 M1452.2 555.7 L1452.2 556.8 L1461.4 556.8 L1461.4 555.7 M1480.5 556.7 L1480.5 557.8 L1486.4 557.8 L1486.4 556.7 M1495.5 556.2 L1495.5 557.3 L1499.7 557.3 L1499.7 556.2" fill="none" stroke="#1fdc1f" stroke-width="1.2"/>
<circle cx="1203.3" cy="434.6" r="1.3" fill="none" stroke="#1fdc1f" stroke-width="0.8"/>
<circle cx="1338.5" cy="460.3" r="1.3" fill="none" stroke="#1fdc1f" stroke-width="0.8"/>
<circle cx="1338.5" cy="486.9" r="1.3" fill="none" stroke="#1fdc1f" stroke-width="0.8"/>
<circle cx="1299.9" cy="512.9" r="1.3" fill="none" stroke="#1fdc1f" stroke-width="0.8"/>
<circle cx="1339.0" cy="512.9" r="1.3" fill="none" stroke="#1fdc1f" stroke-width="0.8"/>
<circle cx="1181.7" cy="543.7" r="1.3" fill="none" stroke="#1fdc1f" stroke-width="0.8"/>
<circle cx="1372.8" cy="459.1" r="1.4" fill="none" stroke="#1fdc1f" stroke-width="0.8"/>
<circle cx="1372.8" cy="480.4" r="1.4" fill="none" stroke="#1fdc1f" stroke-width="0.8"/>
<circle cx="1372.8" cy="501.6" r="1.4" fill="none" stroke="#1fdc1f" stroke-width="0.8"/>
<circle cx="1372.8" cy="522.7" r="1.4" fill="none" stroke="#1fdc1f" stroke-width="0.8"/>
<circle cx="1372.8" cy="543.2" r="1.4" fill="none" stroke="#1fdc1f" stroke-width="0.8"/>
<circle cx="1400.1" cy="459.1" r="1.4" fill="none" stroke="#1fdc1f" stroke-width="0.8"/>
<circle cx="1400.1" cy="480.4" r="1.4" fill="none" stroke="#1fdc1f" stroke-width="0.8"/>
<circle cx="1400.1" cy="501.6" r="1.4" fill="none" stroke="#1fdc1f" stroke-width="0.8"/>
<circle cx="1400.1" cy="522.7" r="1.4" fill="none" stroke="#1fdc1f" stroke-width="0.8"/>
<circle cx="1400.1" cy="543.2" r="1.4" fill="none" stroke="#1fdc1f" stroke-width="0.8"/>
<circle cx="1445.6" cy="459.1" r="1.4" fill="none" stroke="#1fdc1f" stroke-width="0.8"/>
<circle cx="1445.6" cy="480.4" r="1.4" fill="none" stroke="#1fdc1f" stroke-width="0.8"/>
<circle cx="1445.6" cy="501.6" r="1.4" fill="none" stroke="#1fdc1f" stroke-width="0.8"/>
<circle cx="1445.6" cy="522.7" r="1.4" fill="none" stroke="#1fdc1f" stroke-width="0.8"/>
<circle cx="1445.6" cy="543.2" r="1.4" fill="none" stroke="#1fdc1f" stroke-width="0.8"/>
<circle cx="1481.7" cy="459.1" r="1.4" fill="none" stroke="#1fdc1f" stroke-width="0.8"/>
<circle cx="1481.7" cy="480.4" r="1.4" fill="none" stroke="#1fdc1f" stroke-width="0.8"/>
<circle cx="1481.7" cy="501.6" r="1.4" fill="none" stroke="#1fdc1f" stroke-width="0.8"/>
<circle cx="1481.7" cy="522.7" r="1.4" fill="none" stroke="#1fdc1f" stroke-width="0.8"/>
<circle cx="1481.7" cy="543.2" r="1.4" fill="none" stroke="#1fdc1f" stroke-width="0.8"/>
<rect x="1183.2" y="422.4" width="7.6" height="4.2" fill="#5c6038"/><rect x="1184.7" y="423.9" width="4.6" height="1" fill="#9aa04a"/>
<rect x="1189.2" y="437.0" width="7.6" height="4.2" fill="#5c6038"/><rect x="1190.7" y="438.5" width="4.6" height="1" fill="#9aa04a"/>
<rect x="1217.0" y="556.9" width="7.6" height="4.2" fill="#5c6038"/><rect x="1218.5" y="558.4" width="4.6" height="1" fill="#9aa04a"/>
<rect x="1177.9" y="521.9" width="7.6" height="4.2" fill="#5c6038"/><rect x="1179.4" y="523.4" width="4.6" height="1" fill="#9aa04a"/>
<rect x="1177.0" y="556.9" width="7.6" height="4.2" fill="#5c6038"/><rect x="1178.5" y="558.4" width="4.6" height="1" fill="#9aa04a"/>
<circle cx="1514.9" cy="458.8" r="1.4" fill="none" stroke="#1fdc1f" stroke-width="0.8"/>
<circle cx="1514.9" cy="480.1" r="1.4" fill="none" stroke="#1fdc1f" stroke-width="0.8"/>
<circle cx="1514.9" cy="501.3" r="1.4" fill="none" stroke="#1fdc1f" stroke-width="0.8"/>
<circle cx="1514.9" cy="522.2" r="1.4" fill="none" stroke="#1fdc1f" stroke-width="0.8"/>
<circle cx="1514.9" cy="543.1" r="1.4" fill="none" stroke="#1fdc1f" stroke-width="0.8"/>
<circle cx="1542.3" cy="458.8" r="1.4" fill="none" stroke="#1fdc1f" stroke-width="0.8"/>
<circle cx="1542.3" cy="480.1" r="1.4" fill="none" stroke="#1fdc1f" stroke-width="0.8"/>
<circle cx="1542.3" cy="501.3" r="1.4" fill="none" stroke="#1fdc1f" stroke-width="0.8"/>
<circle cx="1542.3" cy="522.2" r="1.4" fill="none" stroke="#1fdc1f" stroke-width="0.8"/>
<circle cx="1542.3" cy="543.1" r="1.4" fill="none" stroke="#1fdc1f" stroke-width="0.8"/>
<path d="M1496.4 556.1 L1496.4 557.2 L1504.7 557.2 L1504.7 556.1 M1539.5 556.1 L1539.5 557.2 L1554.4 557.2 L1554.4 556.1 M1513.8 557.2 L1513.8 558.3 L1519.6 558.3 L1519.6 557.2" fill="none" stroke="#1fdc1f" stroke-width="1.2"/>
<circle cx="989.5" cy="595.3" r="1.4" fill="none" stroke="#1fdc1f" stroke-width="0.8"/>
<circle cx="989.5" cy="666.2" r="1.4" fill="none" stroke="#1fdc1f" stroke-width="0.8"/>
<circle cx="989.5" cy="733.2" r="1.4" fill="none" stroke="#1fdc1f" stroke-width="0.8"/>
<rect x="1089.5" y="577.2" width="1.5" height="1.5" fill="#111"/>
<rect x="1089.5" y="598.7" width="1.5" height="1.5" fill="#111"/>
<rect x="1089.5" y="622.9" width="1.5" height="1.5" fill="#111"/>
<rect x="1113.2" y="598.7" width="1.5" height="1.5" fill="#111"/>
<rect x="1113.2" y="622.9" width="1.5" height="1.5" fill="#111"/>
<rect x="1113.2" y="649.2" width="1.5" height="1.5" fill="#111"/>
<rect x="1063.7" y="650.8" width="1.5" height="1.5" fill="#111"/>
<rect x="1089.5" y="649.2" width="1.5" height="1.5" fill="#111"/>
<rect x="1024.9" y="668.0" width="1.5" height="1.5" fill="#111"/>
<rect x="1054.4" y="668.0" width="1.5" height="1.5" fill="#111"/>
<rect x="1089.5" y="668.0" width="1.5" height="1.5" fill="#111"/>
<rect x="1112.3" y="668.0" width="1.5" height="1.5" fill="#111"/>
<rect x="1021.6" y="726.6" width="1.5" height="1.5" fill="#111"/>
<rect x="1044.4" y="726.6" width="1.5" height="1.5" fill="#111"/>
<rect x="1067.4" y="726.6" width="1.5" height="1.5" fill="#111"/>
<rect x="1090.4" y="726.6" width="1.5" height="1.5" fill="#111"/>
<rect x="1113.2" y="726.6" width="1.5" height="1.5" fill="#111"/>
<rect x="1020.8" y="749.9" width="1.5" height="1.5" fill="#111"/>
<rect x="1044.4" y="749.9" width="1.5" height="1.5" fill="#111"/>
<rect x="1067.4" y="749.9" width="1.5" height="1.5" fill="#111"/>
<rect x="1090.4" y="749.9" width="1.5" height="1.5" fill="#111"/>
<rect x="1113.2" y="749.9" width="1.5" height="1.5" fill="#111"/>
<rect x="1163.6" y="581.2" width="1.5" height="1.5" fill="#111"/>
<rect x="1151.5" y="603.9" width="1.5" height="1.5" fill="#111"/>
<rect x="1163.6" y="615.9" width="1.5" height="1.5" fill="#111"/>
<rect x="1151.5" y="639.2" width="1.5" height="1.5" fill="#111"/>
<rect x="1163.6" y="641.3" width="1.5" height="1.5" fill="#111"/>
<circle cx="1012.0" cy="705.2" r="1.7" fill="none" stroke="#1fdc1f" stroke-width="0.8"/>
<circle cx="1031.2" cy="705.2" r="1.7" fill="none" stroke="#1fdc1f" stroke-width="0.8"/>
<circle cx="1051.5" cy="704.9" r="1.7" fill="none" stroke="#1fdc1f" stroke-width="0.8"/>
<circle cx="1084.8" cy="689.4" r="1.7" fill="none" stroke="#1fdc1f" stroke-width="0.8"/>
<circle cx="1103.4" cy="689.4" r="1.7" fill="none" stroke="#1fdc1f" stroke-width="0.8"/>
<circle cx="1120.6" cy="689.4" r="1.7" fill="none" stroke="#1fdc1f" stroke-width="0.8"/>
<path d="M1151.4 741.5 L1151.4 749.8 M1150.1 741.5 L1152.7 741.5 M1150.1 749.8 L1152.7 749.8" fill="none" stroke="#1fdc1f" stroke-width="1.1"/>
<path d="M1083.9 623.4 L1083.9 624.5 L1093.1 624.5 L1093.1 623.4 M1108.1 623.4 L1108.1 624.5 L1117.2 624.5 L1117.2 623.4 M1019.8 668.3 L1019.8 669.4 L1028.2 669.4 L1028.2 668.3 M1049.0 668.3 L1049.0 669.4 L1058.1 669.4 L1058.1 668.3 M1083.9 668.3 L1083.9 669.4 L1093.1 669.4 L1093.1 668.3 M1107.3 668.3 L1107.3 669.4 L1116.4 669.4 L1116.4 668.3 M1013.2 689.6 L1013.2 690.7 L1022.3 690.7 L1022.3 689.6 M1033.2 689.6 L1033.2 690.7 L1042.3 690.7 L1042.3 689.6 M1053.1 689.6 L1053.1 690.7 L1061.5 690.7 L1061.5 689.6 M1013.2 703.4 L1013.2 704.5 L1022.3 704.5 L1022.3 703.4 M1033.2 707.9 L1033.2 709.0 L1042.3 709.0 L1042.3 707.9 M1053.1 707.9 L1053.1 709.0 L1061.5 709.0 L1061.5 707.9 M1073.1 684.1 L1073.1 685.2 L1082.3 685.2 L1082.3 684.1 M1093.1 684.1 L1093.1 685.2 L1101.4 685.2 L1101.4 684.1 M1112.2 683.8 L1112.2 684.9 L1121.4 684.9 L1121.4 683.8 M1073.1 702.4 L1073.1 703.5 L1082.3 703.5 L1082.3 702.4 M1093.1 702.4 L1093.1 703.5 L1101.4 703.5 L1101.4 702.4 M1112.2 702.4 L1112.2 703.5 L1121.4 703.5 L1121.4 702.4 M1016.5 727.1 L1016.5 728.2 L1024.8 728.2 L1024.8 727.1 M1039.8 727.1 L1039.8 728.2 L1049.0 728.2 L1049.0 727.1 M1062.3 727.1 L1062.3 728.2 L1071.5 728.2 L1071.5 727.1 M1085.6 727.1 L1085.6 728.2 L1094.8 728.2 L1094.8 727.1 M1108.1 727.1 L1108.1 728.2 L1117.2 728.2 L1117.2 727.1 M1016.5 750.4 L1016.5 751.5 L1024.8 751.5 L1024.8 750.4 M1062.3 750.4 L1062.3 751.5 L1071.5 751.5 L1071.5 750.4 M1085.6 750.4 L1085.6 751.5 L1094.8 751.5 L1094.8 750.4 M1108.1 750.4 L1108.1 751.5 L1117.2 751.5 L1117.2 750.4 M1165.5 712.9 L1165.5 714.0 L1174.7 714.0 L1174.7 712.9 M1166.4 575.6 L1166.4 576.7 L1176.4 576.7 L1176.4 575.6" fill="none" stroke="#1fdc1f" stroke-width="1"/>
<rect x="1019.6" y="693.4" width="1.2" height="1.2" fill="#ff9a3c"/>
<rect x="1082.8" y="642.3" width="1.2" height="1.2" fill="#ff9a3c"/>
<rect x="1104.5" y="601.5" width="1.2" height="1.2" fill="#ff9a3c"/>
<rect x="1062.9" y="734.6" width="1.2" height="1.2" fill="#ff9a3c"/>
<rect x="1074.5" y="735.1" width="1.2" height="1.2" fill="#ff9a3c"/>
<rect x="1096.7" y="735.1" width="1.2" height="1.2" fill="#ff9a3c"/>
<rect x="1115.0" y="698.9" width="1.2" height="1.2" fill="#ff9a3c"/>
<rect x="1115.8" y="578.6" width="1.2" height="1.2" fill="#ff9a3c"/>
<rect x="1126.8" y="617.5" width="7.6" height="4.2" fill="#5f5f5c"/><rect x="1128.0" y="619.1" width="4" height="0.9" fill="#a4b43c"/>
<rect x="1123.4" y="681.6" width="7.6" height="4.2" fill="#5f5f5c"/><rect x="1124.6" y="683.2" width="4" height="0.9" fill="#a4b43c"/>
<rect x="1144.7" y="609.0" width="7.6" height="4.2" fill="#5f5f5c"/><rect x="1145.9" y="610.6" width="4" height="0.9" fill="#a4b43c"/>
<rect x="1145.6" y="678.1" width="7.6" height="4.2" fill="#5f5f5c"/><rect x="1146.8" y="679.7" width="4" height="0.9" fill="#a4b43c"/>
<rect x="1133.9" y="715.3" width="7.6" height="4.2" fill="#5f5f5c"/><rect x="1135.1" y="716.9" width="4" height="0.9" fill="#a4b43c"/>
<rect x="1140.1" y="746.6" width="7.6" height="4.2" fill="#5f5f5c"/><rect x="1141.3" y="748.2" width="4" height="0.9" fill="#a4b43c"/>
<path d="M1165.8 575.6 L1165.8 576.7 L1175.8 576.7 L1175.8 575.6 M1250.7 575.6 L1250.7 576.7 L1259.0 576.7 L1259.0 575.6 M1298.2 578.6 L1298.2 579.7 L1306.5 579.7 L1306.5 578.6 M1342.3 578.9 L1342.3 580.0 L1350.6 580.0 L1350.6 578.9 M1391.4 578.4 L1391.4 579.5 L1400.6 579.5 L1400.6 578.4 M1430.5 578.4 L1430.5 579.5 L1438.9 579.5 L1438.9 578.4 M1199.9 642.2 L1199.9 643.3 L1209.9 643.3 L1209.9 642.2" fill="none" stroke="#1fdc1f" stroke-width="1.1"/>
<rect x="1187.5" y="590.0" width="1.6" height="1.6" fill="#111"/>
<rect x="1206.3" y="590.4" width="1.6" height="1.6" fill="#111"/>
<rect x="1243.8" y="590.0" width="1.6" height="1.6" fill="#111"/>
<rect x="1187.5" y="615.5" width="1.6" height="1.6" fill="#111"/>
<rect x="1222.0" y="615.5" width="1.6" height="1.6" fill="#111"/>
<rect x="1243.8" y="615.5" width="1.6" height="1.6" fill="#111"/>
<rect x="1185.0" y="641.3" width="1.6" height="1.6" fill="#111"/>
<rect x="1203.0" y="641.3" width="1.6" height="1.6" fill="#111"/>
<rect x="1243.8" y="640.8" width="1.6" height="1.6" fill="#111"/>
<path d="M1160.0 667.1 L1160.0 676.2 M1158.7 667.1 L1161.3 667.1 M1158.7 676.2 L1161.3 676.2 M1160.0 693.2 L1160.0 702.7 M1158.7 693.2 L1161.3 693.2 M1158.7 702.7 L1161.3 702.7 M1180.0 667.1 L1180.0 676.2 M1178.7 667.1 L1181.3 667.1 M1178.7 676.2 L1181.3 676.2 M1180.0 693.2 L1180.0 702.7 M1178.7 693.2 L1181.3 693.2 M1178.7 702.7 L1181.3 702.7 M1199.6 667.1 L1199.6 676.2 M1198.3 667.1 L1200.9 667.1 M1198.3 676.2 L1200.9 676.2 M1199.6 693.2 L1199.6 702.7 M1198.3 693.2 L1200.9 693.2 M1198.3 702.7 L1200.9 702.7 M1219.6 667.1 L1219.6 676.2 M1218.3 667.1 L1220.9 667.1 M1218.3 676.2 L1220.9 676.2 M1219.6 693.2 L1219.6 702.7 M1218.3 693.2 L1220.9 693.2 M1218.3 702.7 L1220.9 702.7 M1239.4 667.1 L1239.4 676.2 M1238.1 667.1 L1240.7 667.1 M1238.1 676.2 L1240.7 676.2 M1239.4 693.2 L1239.4 702.7 M1238.1 693.2 L1240.7 693.2 M1238.1 702.7 L1240.7 702.7" fill="none" stroke="#1fdc1f" stroke-width="1"/>
<rect x="1213.6" y="574.2" width="7.6" height="4.2" fill="#5c6038"/><rect x="1215.1" y="575.7" width="4.6" height="1" fill="#9aa04a"/>
<rect x="775.7" y="608.7" width="5.4" height="2.6" fill="#3c4218"/><rect x="776.4" y="607.5" width="4" height="1.3" fill="#d8e000"/>
<rect x="777.1" y="673.7" width="5.4" height="2.6" fill="#3c4218"/><rect x="777.8" y="672.5" width="4" height="1.3" fill="#d8e000"/>
<rect x="775.1" y="726.1" width="5.4" height="2.6" fill="#3c4218"/><rect x="775.8" y="724.9" width="4" height="1.3" fill="#d8e000"/>
<circle cx="778.4" cy="823.6" r="1.4" fill="none" stroke="#1fdc1f" stroke-width="0.8"/>
<circle cx="778.4" cy="874.2" r="1.4" fill="none" stroke="#1fdc1f" stroke-width="0.8"/>
<circle cx="708.5" cy="880.2" r="1.6" fill="none" stroke="#1fdc1f" stroke-width="0.8"/>
<circle cx="758.1" cy="880.2" r="1.6" fill="none" stroke="#1fdc1f" stroke-width="0.8"/>
<circle cx="695.7" cy="908.2" r="1.6" fill="none" stroke="#1fdc1f" stroke-width="0.8"/>
<circle cx="826.7" cy="813.3" r="1.6" fill="none" stroke="#1fdc1f" stroke-width="0.8"/>
<circle cx="826.7" cy="888.2" r="1.6" fill="none" stroke="#1fdc1f" stroke-width="0.8"/>
<rect x="829.4" y="814.3" width="1.3" height="1.3" fill="#111"/>
<rect x="829.4" y="889.2" width="1.3" height="1.3" fill="#111"/>
<rect x="775.4" y="781.6" width="5.4" height="2.6" fill="#3c4218"/><rect x="776.1" y="780.4" width="4" height="1.3" fill="#d8e000"/>
<rect x="894.6" y="814.3" width="1.3" height="1.3" fill="#111"/>
<rect x="963.7" y="814.3" width="1.3" height="1.3" fill="#111"/>
<rect x="894.3" y="889.2" width="1.3" height="1.3" fill="#111"/>
<rect x="963.4" y="888.9" width="1.3" height="1.3" fill="#111"/>
<circle cx="892.0" cy="813.3" r="1.6" fill="none" stroke="#1fdc1f" stroke-width="0.8"/>
<circle cx="961.1" cy="813.3" r="1.6" fill="none" stroke="#1fdc1f" stroke-width="0.8"/>
<circle cx="1005.2" cy="863.2" r="1.6" fill="none" stroke="#1fdc1f" stroke-width="0.8"/>
<circle cx="1021.8" cy="887.7" r="1.6" fill="none" stroke="#1fdc1f" stroke-width="0.8"/>
<circle cx="1069.5" cy="887.7" r="1.6" fill="none" stroke="#1fdc1f" stroke-width="0.8"/>
<circle cx="989.5" cy="798.6" r="1.4" fill="none" stroke="#1fdc1f" stroke-width="0.8"/>
<circle cx="1081.4" cy="903.5" r="1.4" fill="none" stroke="#1fdc1f" stroke-width="0.8"/>
<rect x="1021.1" y="773.7" width="1.5" height="1.5" fill="#111"/>
<rect x="1044.4" y="773.7" width="1.5" height="1.5" fill="#111"/>
<rect x="1067.4" y="773.7" width="1.5" height="1.5" fill="#111"/>
<rect x="1090.4" y="773.7" width="1.5" height="1.5" fill="#111"/>
<rect x="1113.2" y="773.7" width="1.5" height="1.5" fill="#111"/>
<rect x="1031.6" y="812.9" width="1.5" height="1.5" fill="#111"/>
<rect x="1076.2" y="812.9" width="1.5" height="1.5" fill="#111"/>
<rect x="1121.5" y="812.9" width="1.5" height="1.5" fill="#111"/>
<rect x="1154.3" y="818.9" width="1.5" height="1.5" fill="#111"/>
<rect x="1175.6" y="818.9" width="1.5" height="1.5" fill="#111"/>
<rect x="1154.3" y="848.3" width="1.5" height="1.5" fill="#111"/>
<rect x="1175.6" y="848.3" width="1.5" height="1.5" fill="#111"/>
<rect x="1154.3" y="874.5" width="1.5" height="1.5" fill="#111"/>
<rect x="1175.6" y="874.5" width="1.5" height="1.5" fill="#111"/>
<rect x="1154.3" y="894.9" width="1.5" height="1.5" fill="#111"/>
<rect x="1175.6" y="894.9" width="1.5" height="1.5" fill="#111"/>
<path d="M1016.5 774.2 L1016.5 775.3 L1024.8 775.3 L1024.8 774.2 M1039.5 774.2 L1039.5 775.3 L1047.8 775.3 L1047.8 774.2 M1062.3 774.2 L1062.3 775.3 L1071.5 775.3 L1071.5 774.2 M1085.6 774.2 L1085.6 775.3 L1094.8 775.3 L1094.8 774.2 M1108.4 774.2 L1108.4 775.3 L1117.7 775.3 L1117.7 774.2 M1141.4 802.7 L1141.4 803.8 L1148.9 803.8 L1148.9 802.7 M1166.4 802.7 L1166.4 803.8 L1173.0 803.8 L1173.0 802.7 M1164.7 778.9 L1164.7 780.0 L1173.0 780.0 L1173.0 778.9 M1149.7 819.2 L1149.7 820.3 L1159.7 820.3 L1159.7 819.2 M1171.4 819.2 L1171.4 820.3 L1179.7 820.3 L1179.7 819.2 M1149.7 849.1 L1149.7 850.2 L1159.7 850.2 L1159.7 849.1 M1171.4 849.1 L1171.4 850.2 L1179.7 850.2 L1179.7 849.1 M1136.4 911.7 L1136.4 912.8 L1144.7 912.8 L1144.7 911.7 M1169.7 911.7 L1169.7 912.8 L1178.0 912.8 L1178.0 911.7" fill="none" stroke="#1fdc1f" stroke-width="0.9"/>
<rect x="1039.2" y="768.6" width="1.2" height="1.2" fill="#ff9a3c"/>
<rect x="1054.2" y="773.5" width="1.2" height="1.2" fill="#ff9a3c"/>
<rect x="1080.8" y="773.9" width="1.2" height="1.2" fill="#ff9a3c"/>
<rect x="886.2" y="885.6" width="7.6" height="4.2" fill="#5f5f5c"/><rect x="887.4" y="887.2" width="4" height="0.9" fill="#a4b43c"/>
<rect x="957.3" y="884.9" width="7.6" height="4.2" fill="#5f5f5c"/><rect x="958.5" y="886.5" width="4" height="0.9" fill="#a4b43c"/>
<rect x="1129.3" y="755.9" width="7.6" height="4.2" fill="#5f5f5c"/><rect x="1130.5" y="757.5" width="4" height="0.9" fill="#a4b43c"/>
<rect x="1159.2" y="783.4" width="7.6" height="4.2" fill="#5f5f5c"/><rect x="1160.4" y="785.0" width="4" height="0.9" fill="#a4b43c"/>
<rect x="1158.4" y="801.2" width="7.6" height="4.2" fill="#5f5f5c"/><rect x="1159.6" y="802.8" width="4" height="0.9" fill="#a4b43c"/>
<path d="M1190.0 802.7 L1190.0 803.8 L1197.4 803.8 L1197.4 802.7 M1206.6 802.2 L1206.6 803.3 L1213.3 803.3 L1213.3 802.2 M1215.8 802.7 L1215.8 803.8 L1221.6 803.8 L1221.6 802.7 M1199.1 916.2 L1199.1 917.3 L1207.4 917.3 L1207.4 916.2" fill="none" stroke="#1fdc1f" stroke-width="0.9"/>
<rect x="1184.0" y="813.4" width="2" height="2" fill="#111"/>
<rect x="1207.2" y="874.5" width="1.5" height="1.5" fill="#111"/>
<rect x="1207.2" y="894.9" width="1.5" height="1.5" fill="#111"/>
<rect x="1222.7" y="892.9" width="1.2" height="1.2" fill="#222"/>
<rect x="1244.9" y="789.5" width="7.6" height="4.2" fill="#5f5f5c"/><rect x="1246.1" y="791.1" width="4" height="0.9" fill="#a4b43c"/>
<rect x="1246.1" y="858.1" width="7.6" height="4.2" fill="#5f5f5c"/><rect x="1247.3" y="859.7" width="4" height="0.9" fill="#a4b43c"/>
<rect x="1223.1" y="872.8" width="7.6" height="4.2" fill="#5f5f5c"/><rect x="1224.3" y="874.4" width="4" height="0.9" fill="#a4b43c"/>
<path d="M1474.0 578.4 L1474.0 579.5 L1483.2 579.5 L1483.2 578.4 M1523.1 578.4 L1523.1 579.5 L1533.9 579.5 L1533.9 578.4 M1300.0 578.4 L1300.0 579.5 L1307.5 579.5 L1307.5 578.4" fill="none" stroke="#1fdc1f" stroke-width="1.1"/>
<clipPath id="hc"><rect x="1535.5" y="330" width="59.5" height="600"/></clipPath>
<g clip-path="url(#hc)"><path d="M1535.5 227.4 L1595 167.9 M1535.5 264.7 L1595 205.2 M1535.5 289.6 L1595 230.1 M1535.5 326.8 L1595 267.3 M1535.5 351.7 L1595 292.2 M1535.5 389.0 L1595 329.5 M1535.5 413.9 L1595 354.4 M1535.5 451.1 L1595 391.6 M1535.5 476.0 L1595 416.5 M1535.5 513.3 L1595 453.8 M1535.5 538.1 L1595 478.6 M1535.5 575.4 L1595 515.9 M1535.5 600.3 L1595 540.8 M1535.5 637.6 L1595 578.1 M1535.5 662.4 L1595 602.9 M1535.5 699.7 L1595 640.2 M1535.5 724.6 L1595 665.1 M1535.5 761.9 L1595 702.4 M1535.5 786.7 L1595 727.2 M1535.5 824.0 L1595 764.5 M1535.5 848.9 L1595 789.4 M1535.5 886.2 L1595 826.7 M1535.5 911.0 L1595 851.5 M1535.5 948.3 L1595 888.8 M1535.5 973.2 L1595 913.7" stroke="#3c3c3c" stroke-width="0.65" fill="none"/><path d="M1535.5 239.8 L1595 180.3 M1535.5 302.0 L1595 242.5 M1535.5 364.1 L1595 304.6 M1535.5 426.3 L1595 366.8 M1535.5 488.4 L1595 428.9 M1535.5 550.6 L1595 491.1 M1535.5 612.7 L1595 553.2 M1535.5 674.9 L1595 615.4 M1535.5 737.0 L1595 677.5 M1535.5 799.2 L1595 739.7 M1535.5 861.3 L1595 801.8 M1535.5 923.5 L1595 864.0 M1535.5 985.6 L1595 926.1" stroke="#707070" stroke-width="0.55" fill="none"/><path d="M1535.5 252.3 L1595 192.8 M1535.5 277.1 L1595 217.6 M1535.5 314.4 L1595 254.9 M1535.5 339.3 L1595 279.8 M1535.5 376.6 L1595 317.1 M1535.5 401.4 L1595 341.9 M1535.5 438.7 L1595 379.2 M1535.5 463.6 L1595 404.1 M1535.5 500.9 L1595 441.4 M1535.5 525.7 L1595 466.2 M1535.5 563.0 L1595 503.5 M1535.5 587.9 L1595 528.4 M1535.5 625.2 L1595 565.7 M1535.5 650.0 L1595 590.5 M1535.5 687.3 L1595 627.8 M1535.5 712.2 L1595 652.7 M1535.5 749.5 L1595 690.0 M1535.5 774.3 L1595 714.8 M1535.5 811.6 L1595 752.1 M1535.5 836.5 L1595 777.0 M1535.5 873.8 L1595 814.3 M1535.5 898.6 L1595 839.1 M1535.5 935.9 L1595 876.4 M1535.5 960.8 L1595 901.3 M1535.5 998.1 L1595 938.6" stroke="#bcbcbc" stroke-width="0.8" stroke-dasharray="5 2.5" fill="none"/></g>
<path d="M1535.5 330 L1535.5 930" stroke="#c2c2c2" stroke-width="0.9"/>
<path d="M413 930 L413 329 L1684.5 329" fill="none" stroke="#000" stroke-width="2"/>
<path d="M1684 328 L1684 930" fill="none" stroke="#000" stroke-width="1.5"/>
<path d="M1595 330 L1595 930" stroke="#4a4a4a" stroke-width="1.2"/>
<path d="M1595 335.2 L1683 335.2 M1595 342.1 L1683 342.1 M1595 348.5 L1683 348.5 M1595 355.3 L1683 355.3 M1595 375.2 L1683 375.2" stroke="#222" stroke-width="0.9" fill="none"/>
<path d="M1595 361.9 L1683 361.9 M1595 368.3 L1683 368.3 M1595 381.5 L1683 381.5" stroke="#9a9a9a" stroke-width="0.9" fill="none"/>
<path d="M1595 388.3 L1683 388.3 M1595 401.5 L1683 401.5 M1595 519.8 L1683 519.8" stroke="#111" stroke-width="1.3" fill="none"/>
<path d="M1625.5 330 L1625.5 342.1 M1653.4 330 L1653.4 342.1 M1625.5 348.5 L1625.5 408 M1653.4 348.5 L1653.4 408" stroke="#222" stroke-width="0.9" fill="none"/>
<rect x="1602.0" y="330.7" width="15.0" height="2.6" fill="#222" opacity="0.6"/>
<rect x="1633.0" y="330.7" width="11.0" height="2.6" fill="#222" opacity="0.6"/>
<rect x="1596.5" y="337.5" width="26.0" height="2.6" fill="#222" opacity="0.6"/>
<rect x="1633.0" y="337.5" width="12.0" height="2.6" fill="#222" opacity="0.6"/>
<rect x="1627.0" y="344.1" width="23.0" height="2.6" fill="#222" opacity="0.6"/>
<rect x="1604.0" y="350.6" width="4.0" height="2.6" fill="#222" opacity="0.6"/>
<rect x="1611.5" y="350.6" width="4.0" height="2.6" fill="#222" opacity="0.6"/>
<rect x="1633.0" y="350.6" width="4.0" height="2.6" fill="#222" opacity="0.6"/>
<rect x="1640.5" y="350.6" width="3.0" height="2.6" fill="#222" opacity="0.6"/>
<rect x="1662.0" y="350.6" width="4.0" height="2.6" fill="#222" opacity="0.6"/>
<rect x="1669.5" y="350.6" width="4.0" height="2.6" fill="#222" opacity="0.6"/>
<rect x="1604.0" y="357.3" width="3.6" height="2.6" fill="#222" opacity="0.6"/>
<rect x="1611.5" y="357.3" width="3.6" height="2.6" fill="#222" opacity="0.6"/>
<rect x="1604.0" y="363.9" width="3.6" height="2.6" fill="#222" opacity="0.6"/>
<rect x="1611.5" y="363.9" width="3.6" height="2.6" fill="#222" opacity="0.6"/>
<rect x="1604.0" y="370.5" width="3.6" height="2.6" fill="#222" opacity="0.6"/>
<rect x="1611.5" y="370.5" width="3.6" height="2.6" fill="#222" opacity="0.6"/>
<rect x="1604.0" y="377.1" width="3.6" height="2.6" fill="#222" opacity="0.6"/>
<rect x="1611.5" y="377.1" width="3.6" height="2.6" fill="#222" opacity="0.6"/>
<rect x="1604.0" y="383.7" width="3.6" height="2.6" fill="#222" opacity="0.6"/>
<rect x="1611.5" y="383.7" width="3.6" height="2.6" fill="#222" opacity="0.6"/>
<rect x="1604.0" y="390.5" width="3.6" height="2.6" fill="#222" opacity="0.6"/>
<rect x="1611.5" y="390.5" width="3.6" height="2.6" fill="#222" opacity="0.6"/>
<rect x="1604.0" y="396.5" width="3.6" height="2.6" fill="#222" opacity="0.6"/>
<rect x="1611.5" y="396.5" width="3.6" height="2.6" fill="#222" opacity="0.6"/>
<rect x="1604.0" y="403.7" width="3.6" height="2.6" fill="#222" opacity="0.6"/>
<rect x="1611.5" y="403.7" width="3.6" height="2.6" fill="#222" opacity="0.6"/>
<rect x="1597.0" y="410.9" width="11.0" height="2.6" fill="#222" opacity="0.6"/>
<rect x="1597.0" y="466.7" width="23.0" height="3.4" fill="#222" opacity="0.6"/>
</svg>
<!-- DRAWING-END -->
<div class="abs zl" style="top:132px">放大</div>
<div class="abs" style="left:158px;top:147px;width:6px;height:754px;box-sizing:border-box;border:1px solid #b0b0b0;background:#e7e7e7;border-radius:2px"></div>
<div class="abs" style="left:148px;top:830px;width:26px;height:26px;border-radius:13px;background:linear-gradient(90deg,#b4e8f0 0%,#7fd0de 30%,#5cc0d2 49%,#2cb4c6 50%,#38a9bd 75%,#4c9db4 100%)"></div>
<div class="abs zl" style="top:903px">缩小</div>
<div class="abs" style="left:174px;top:159px;width:4px;height:1px;background:#e3e3e3"></div><div class="abs" style="left:174px;top:198px;width:4px;height:1px;background:#e3e3e3"></div><div class="abs" style="left:174px;top:236px;width:4px;height:1px;background:#e3e3e3"></div><div class="abs" style="left:174px;top:274px;width:4px;height:1px;background:#e3e3e3"></div><div class="abs" style="left:174px;top:313px;width:4px;height:1px;background:#e3e3e3"></div><div class="abs" style="left:174px;top:351px;width:4px;height:1px;background:#e3e3e3"></div><div class="abs" style="left:174px;top:389px;width:4px;height:1px;background:#e3e3e3"></div><div class="abs" style="left:174px;top:428px;width:4px;height:1px;background:#e3e3e3"></div><div class="abs" style="left:174px;top:466px;width:4px;height:1px;background:#e3e3e3"></div><div class="abs" style="left:174px;top:504px;width:4px;height:1px;background:#e3e3e3"></div><div class="abs" style="left:174px;top:542px;width:4px;height:1px;background:#e3e3e3"></div><div class="abs" style="left:174px;top:581px;width:4px;height:1px;background:#e3e3e3"></div><div class="abs" style="left:174px;top:619px;width:4px;height:1px;background:#e3e3e3"></div><div class="abs" style="left:174px;top:657px;width:4px;height:1px;background:#e3e3e3"></div><div class="abs" style="left:174px;top:696px;width:4px;height:1px;background:#e3e3e3"></div><div class="abs" style="left:174px;top:734px;width:4px;height:1px;background:#e3e3e3"></div><div class="abs" style="left:174px;top:772px;width:4px;height:1px;background:#e3e3e3"></div><div class="abs" style="left:174px;top:810px;width:4px;height:1px;background:#e3e3e3"></div><div class="abs" style="left:174px;top:849px;width:4px;height:1px;background:#e3e3e3"></div><div class="abs" style="left:174px;top:887px;width:4px;height:1px;background:#e3e3e3"></div>
<div class="abs" style="left:1897px;top:125px;width:17px;height:798px;background:#f0f0f0"></div>
<div class="abs" style="left:1897px;top:142px;width:17px;height:463px;background:#cdcdcd"></div>
<svg class="abs" style="left:1897px;top:125px" width="17" height="798" viewBox="0 0 17 798"><path d="M4.5 10.5 L8.5 6.5 L12.5 10.5 M4.5 787.5 L8.5 791.5 L12.5 787.5" fill="none" stroke="#8a8a8a" stroke-width="1.3"/></svg>


<!-- ===== bottom ===== -->
<div id="strip" class="abs"></div>
<div class="abs btab" style="left:3px;top:937px;width:116px;height:24px;padding-top:4px">启动 [0]</div>
<div class="abs btab" style="left:240px;top:937px;width:119px;height:24px;padding-top:4px">应急 [0]</div>
<div class="abs" style="left:3px;top:961px;width:356px;height:1px;background:#e2e2e2"></div>
<div id="tabline" class="abs"></div>
<div class="abs btab" style="left:119px;top:935px;width:120px;height:28px;padding-top:4px;background:linear-gradient(#eef6fd,#eef6fd) no-repeat 2px 2px / 114px 22px,#fff">故障 [1529]</div>
<div id="thead" class="abs"></div>
<div class="abs row" style="top:988px;height:22px;background:#fff"></div>
<div class="abs row" style="top:1011px;height:20px;background:#e9e9e9"></div>
<div class="abs row" style="top:1032px;height:21px;background:#fff"></div>
<div class="abs row" style="top:1054px;height:20px;background:#e9e9e9"></div>
<div class="abs row" style="top:1075px;height:11px;background:#fff"></div>
<div class="abs hl" style="top:1010px"></div>
<div class="abs hl" style="top:1031px"></div>
<div class="abs hl" style="top:1053px"></div>
<div class="abs hl" style="top:1074px"></div>
<div class="abs vl" style="left:4px;top:988px;height:98px"></div>
<div class="abs vl" style="left:177px;top:988px;height:98px"></div>
<div class="abs vl" style="left:215px;top:988px;height:98px"></div>
<div class="abs vl" style="left:284px;top:988px;height:98px"></div>
<div class="abs vl" style="left:321px;top:988px;height:98px"></div>
<div class="abs vl" style="left:388px;top:988px;height:98px"></div>
<div class="abs vl" style="left:572px;top:988px;height:98px"></div>
<div class="abs vl" style="left:610px;top:988px;height:98px"></div>
<div class="abs vl" style="left:648px;top:988px;height:98px"></div>
<div class="abs vl" style="left:888px;top:988px;height:98px"></div>
<div class="abs vl" style="left:993px;top:988px;height:98px"></div>
<div class="abs vh" style="left:177px"></div>
<div class="abs vh" style="left:215px"></div>
<div class="abs vh" style="left:284px"></div>
<div class="abs vh" style="left:321px"></div>
<div class="abs vh" style="left:388px"></div>
<div class="abs vh" style="left:572px"></div>
<div class="abs vh" style="left:610px"></div>
<div class="abs vh" style="left:648px"></div>
<div class="abs vh" style="left:888px"></div>
<div class="abs vh" style="left:993px"></div>
<div class="abs th" style="left:10px">时间</div>
<div class="abs th" style="left:183px">主机</div>
<div class="abs th" style="left:221px">设备</div>
<div class="abs th" style="left:290px">回路</div>
<div class="abs th" style="left:327px">终端地址</div>
<div class="abs th" style="left:394px">灯具型号</div>
<div class="abs th" style="left:578px">区域</div>
<div class="abs th" style="left:616px">位置</div>
<div class="abs th" style="left:654px">页面</div>
<div class="abs th" style="left:894px">故障说明</div>
<div class="abs td" style="left:8px;top:990px;width:169px">2021-09-09 14:23:28.447</div>
<div class="abs td" style="left:181px;top:990px;width:34px">本机</div>
<div class="abs td" style="left:219px;top:990px;width:65px">CAN2-34</div>
<div class="abs td" style="left:288px;top:990px;width:33px">2</div>
<div class="abs td" style="left:325px;top:990px;width:63px">48</div>
<div class="abs td tc" style="left:392px;top:990px;width:180px">壁挂安全出口标志灯(智能型)</div>
<div class="abs td tc" style="left:652px;top:990px;width:236px">延安全民健身中心体育馆A区地下一层</div>
<div class="abs td tc" style="left:892px;top:990px;width:101px">灯具通讯中断。</div>
<div class="abs td" style="left:8px;top:1012px;width:169px">2021-09-09 14:23:28.447</div>
<div class="abs td" style="left:181px;top:1012px;width:34px">本机</div>
<div class="abs td" style="left:219px;top:1012px;width:65px">CAN2-34</div>
<div class="abs td" style="left:288px;top:1012px;width:33px">2</div>
<div class="abs td" style="left:325px;top:1012px;width:63px">47</div>
<div class="abs td tc" style="left:392px;top:1012px;width:180px">壁挂安全出口标志灯(智能型)</div>
<div class="abs td tc" style="left:652px;top:1012px;width:236px">延安全民健身中心体育馆A区地下一层</div>
<div class="abs td tc" style="left:892px;top:1012px;width:101px">灯具通讯中断。</div>
<div class="abs td" style="left:8px;top:1033px;width:169px">2021-09-09 14:23:28.446</div>
<div class="abs td" style="left:181px;top:1033px;width:34px">本机</div>
<div class="abs td" style="left:219px;top:1033px;width:65px">CAN2-34</div>
<div class="abs td" style="left:288px;top:1033px;width:33px">2</div>
<div class="abs td" style="left:325px;top:1033px;width:63px">46</div>
<div class="abs td tc" style="left:392px;top:1033px;width:180px">壁挂安全出口标志灯(智能型)</div>
<div class="abs td tc" style="left:652px;top:1033px;width:236px">延安全民健身中心体育馆A区地下一层</div>
<div class="abs td tc" style="left:892px;top:1033px;width:101px">灯具通讯中断。</div>
<div class="abs td" style="left:8px;top:1055px;width:169px">2021-09-09 14:23:28.446</div>
<div class="abs td" style="left:181px;top:1055px;width:34px">本机</div>
<div class="abs td" style="left:219px;top:1055px;width:65px">CAN2-34</div>
<div class="abs td" style="left:288px;top:1055px;width:33px">2</div>
<div class="abs td" style="left:325px;top:1055px;width:63px">43</div>
<div class="abs td tc" style="left:392px;top:1055px;width:180px">壁挂安全出口标志灯(智能型)</div>
<div class="abs td tc" style="left:652px;top:1055px;width:236px">延安全民健身中心体育馆A区地下一层</div>
<div class="abs td tc" style="left:892px;top:1055px;width:101px">灯具通讯中断。</div>
<div class="abs td" style="left:8px;top:1076px;width:169px">2021-09-09 14:23:28.445</div>
<div class="abs td" style="left:181px;top:1076px;width:34px">本机</div>
<div class="abs td" style="left:219px;top:1076px;width:65px">CAN2-34</div>
<div class="abs td" style="left:288px;top:1076px;width:33px">2</div>
<div class="abs td" style="left:325px;top:1076px;width:63px">42</div>
<div class="abs td tc" style="left:392px;top:1076px;width:180px">壁挂安全出口标志灯(智能型)</div>
<div class="abs td tc" style="left:652px;top:1076px;width:236px">延安全民健身中心体育馆A区地下一层</div>
<div class="abs td tc" style="left:892px;top:1076px;width:101px">灯具通讯中断。</div>
<div class="abs" style="left:1896px;top:962px;width:24px;height:26px;background:#edf5fd"></div>
<div class="abs" style="left:1896px;top:988px;width:24px;height:98px;background:#f0f0f0"></div>
<div class="abs" style="left:1896px;top:1006px;width:24px;height:8px;background:#cdcdcd"></div>
<svg class="abs" style="left:1896px;top:988px" width="24" height="98" viewBox="0 0 24 98"><path d="M8.5 12.5 L12.5 8.5 L16.5 12.5 M8.5 88.5 L12.5 92.5 L16.5 88.5" fill="none" stroke="#8a8a8a" stroke-width="1.3"/></svg>

</body>
</html>
